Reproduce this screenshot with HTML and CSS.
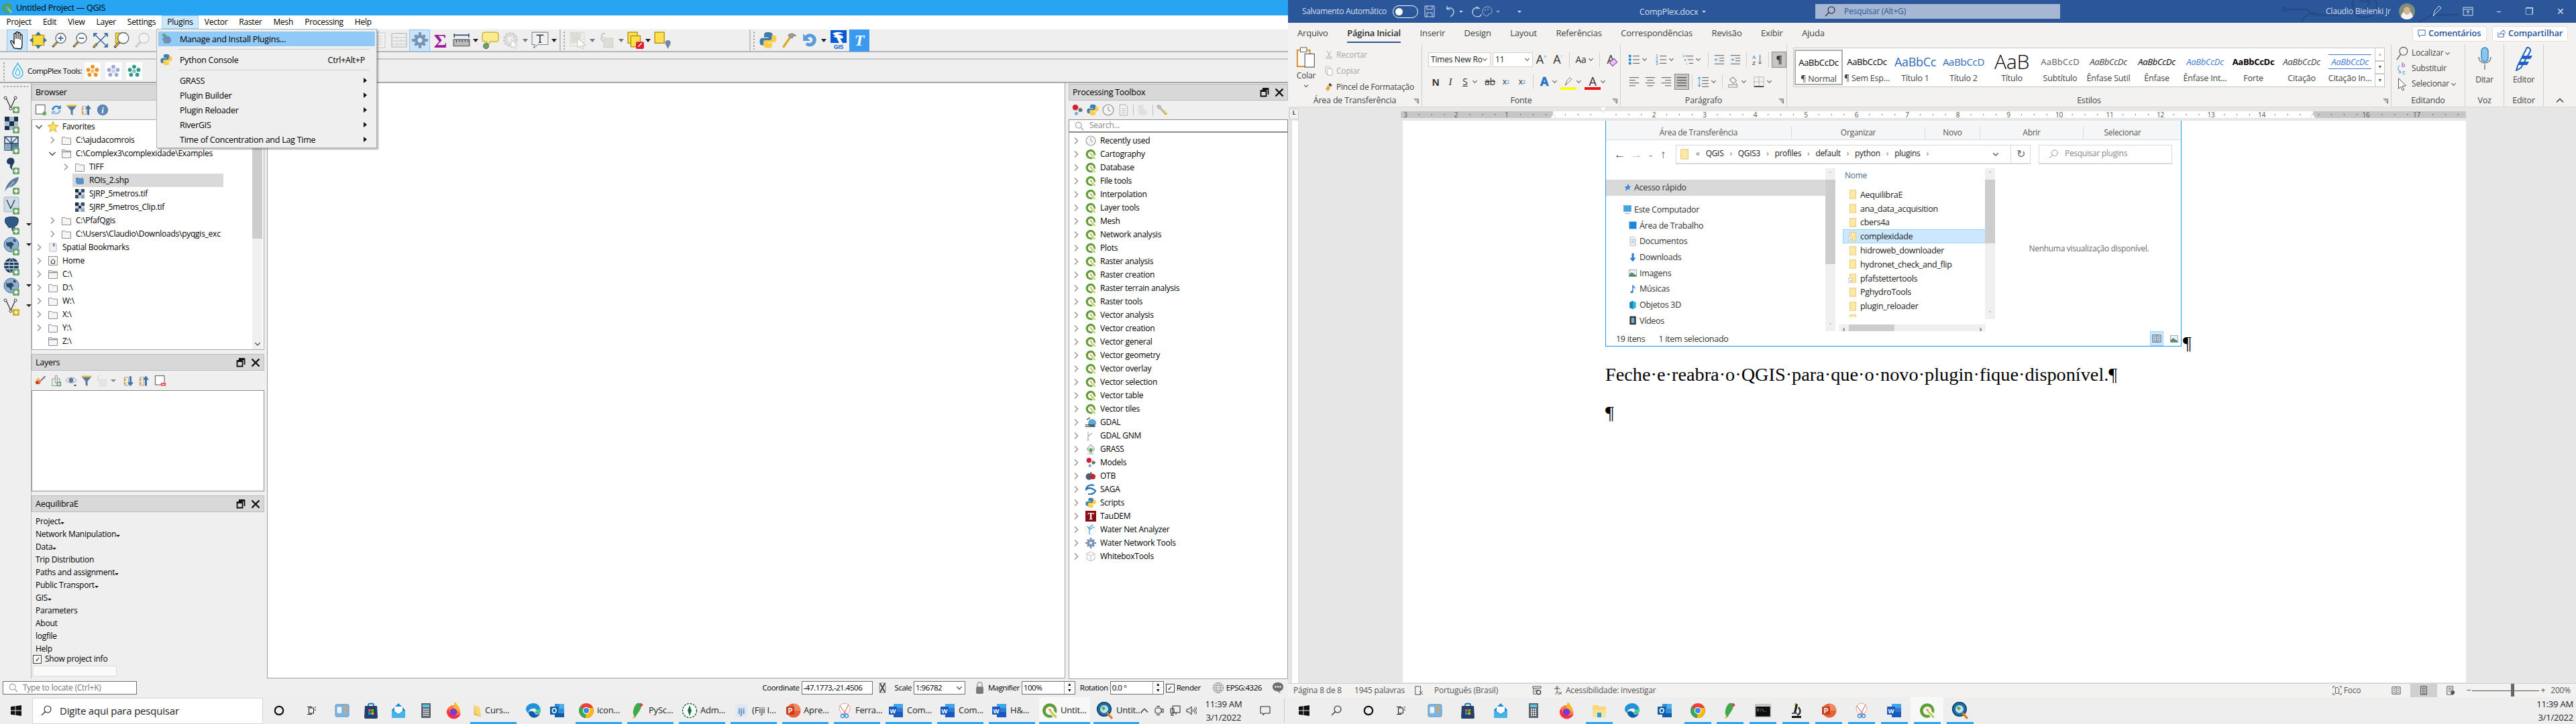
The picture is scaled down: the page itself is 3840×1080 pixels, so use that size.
FILE: index.html
```html
<!DOCTYPE html>
<html lang="en">
<head>
<meta charset="utf-8">
<title>QGIS and Word</title>
<link rel="stylesheet" href="styles.css">
</head>
<body>
<svg class="defs" xmlns="http://www.w3.org/2000/svg">
  <symbol id="qgis" viewBox="0 0 16 16"><path d="M8 .8a7.2 7.2 0 1 0 3.2 13.6L9.2 12.2A4.2 4.2 0 1 1 12.2 8.6l2.2 2A7.2 7.2 0 0 0 8 .8z" fill="#5f9e35"/><path d="M9 9l5.5 6" stroke="#b9cf56" stroke-width="2"/><path d="M6.2 6.2l3.2.4-.6 3.2z" fill="#ee8b2c"/></symbol>
  <symbol id="folder" viewBox="0 0 14 14"><path d="M.5 2.5h4.5l1.5 1.5h7v9.5H.5z" fill="#f5f5f5" stroke="#8f8f8f"/></symbol>
  <symbol id="folderopen" viewBox="0 0 14 14"><path d="M.5 1.5h4.5l1 1.5h7.5v10.5H.5z" fill="#f5f5f5" stroke="#8f8f8f"/><path d="M.5 4.5h13" stroke="#8f8f8f" stroke-width="1.5"/></symbol>
  <symbol id="chev" viewBox="0 0 12 12"><path d="M4 1.5 8.5 6 4 10.5" fill="none" stroke="#9a9a9a" stroke-width="1.6"/></symbol>
  <symbol id="chevd" viewBox="0 0 12 12"><path d="M1.5 4 6 8.5 10.5 4" fill="none" stroke="#555" stroke-width="1.6"/></symbol>
  <symbol id="star" viewBox="0 0 16 18"><path d="M8 1l2.2 5.6 5.6.4-4.3 3.8 1.4 5.8L8 13.6l-4.9 3 1.4-5.8L.2 7l5.6-.4z" fill="#f7e25a" stroke="#d7a92a"/></symbol>
  <symbol id="raster" viewBox="0 0 14 14"><rect width="14" height="14" fill="#c8d4e2"/><rect width="5" height="5" fill="#1e2b3c"/><rect x="9" width="5" height="5" fill="#3b4d66"/><rect x="5" y="5" width="4" height="4" fill="#1e2b3c"/><rect y="9" width="5" height="5" fill="#3b4d66"/><rect x="9" y="9" width="5" height="5" fill="#8ea2ba"/></symbol>
  <symbol id="vecfile" viewBox="0 0 14 14"><path d="M1 3h4l2 1 4-1 2 3v6l-3 1H3l-2-3z" fill="#5a8fc8"/></symbol>
  <symbol id="bookmark" viewBox="0 0 14 16"><rect x="1" y="1" width="12" height="14" rx="1" fill="#f0f0f0" stroke="#bdbdbd"/><path d="M7 1h3v6l-1.5-1L7 7z" fill="#6c8fb2"/></symbol>
  <symbol id="home" viewBox="0 0 14 14"><rect x=".5" y=".5" width="13" height="13" fill="#f5f5f5" stroke="#8f8f8f"/><path d="M3.5 8 7 4.5 10.5 8M4.5 7.5V11h5V7.5" fill="none" stroke="#333"/></symbol>
  <symbol id="glass" viewBox="0 0 24 24"><circle cx="14.5" cy="9" r="7.5" fill="#fdfdfd" stroke="#6d7278" stroke-width="1.4"/><path d="M9 15 2.5 22" stroke="#333" stroke-width="3"/><path d="M8.5 15.5 3.5 21" stroke="#f2c230" stroke-width="1.5"/></symbol>
  <symbol id="hand" viewBox="0 0 24 30"><path d="M7 27l-5-9c-1-2 1-3 2-2l3 4V6c0-2 3-2 3 0v7-9c0-2 3-2 3 0v9-8c0-2 3-2 3 0v9-6c0-2 3-2 3 0v14c0 3-1 5-2 6z" fill="#fff" stroke="#111" stroke-width="1.3"/></symbol>
  <symbol id="pan" viewBox="0 0 24 24"><rect x="4" y="5" width="16" height="14" fill="#f7dc3a" stroke="#b38d10"/><path d="M12 0l4 5H8zM12 24l-4-5h8zM0 12l5-4v8zM24 12l-5 4V8z" fill="#3d6d9e"/></symbol>
  <symbol id="full" viewBox="0 0 24 24"><path d="M2 2h6L2 8zM22 2v6l-6-6zM22 22h-6l6-6z" fill="#3d6d9e"/><path d="M5 5l14 14M19 5 7 17" stroke="#3d6d9e" stroke-width="1.4"/><path d="M7 17l-5 5" stroke="#333" stroke-width="3"/><path d="M6.500 17.500l-4 4" stroke="#f2c230" stroke-width="1.4"/></symbol>
  <symbol id="callout" viewBox="0 0 24 24"><path d="M3 1h18l2 2v9l-2 2H12l-4 6-1-6H3l-2-2V3z" fill="#fdeb93" stroke="#c9a821" stroke-width="1.2"/><circle cx="6" cy="20" r="3.500" fill="#6ea56f" stroke="#3d6d3e"/></symbol>
  <symbol id="textc" viewBox="0 0 24 24"><path d="M1 1h22v17H9l-6 5 2-5H1z" fill="#eef2f5" stroke="#888"/><path d="M7 5h10M12 5v10M10 15h4" stroke="#444" stroke-width="1.6" fill="none"/></symbol>
  <symbol id="ruler" viewBox="0 0 24 24"><path d="M2 3v5M22 3v5M2 5h20" stroke="#36506f" stroke-width="1.6"/><rect x="1" y="11" width="22" height="9" fill="#bbb" stroke="#555"/><path d="M5 11v4M9 11v3M13 11v4M17 11v3M21 11v4" stroke="#444"/></symbol>
  <symbol id="squares" viewBox="0 0 24 24"><rect x="1" y="1" width="13" height="15" fill="#fde24d" stroke="#b08d10" stroke-width="1.2"/><rect x="5" y="6" width="13" height="15" fill="#fde24d" stroke="#b08d10" stroke-width="1.2"/><rect x="12" y="14" width="11" height="10" rx="2" fill="#e11b2c"/><path d="M15 21l5-5" stroke="#fff" stroke-width="1.400"/></symbol>
  <symbol id="selpin" viewBox="0 0 24 24"><rect x="1" y="1" width="13" height="15" fill="#fde24d" stroke="#b08d10" stroke-width="1.2"/><path d="M19 24l-3.500-7a3.800 3.800 0 1 1 7 0z" fill="#6f8aa3"/></symbol>
  <symbol id="python" viewBox="0 0 24 24"><path d="M12 1C7 1 6.500 3 6.500 5v3h6v1H4c-2.500 0-3.500 2-3.500 5s1 5 3.500 5h3v-4c0-2 1.500-3 3-3h6c1.500 0 2.500-1 2.500-2.500V5c0-2-2-4-6.500-4z" fill="#3f7cac"/><path d="M12 23c5 0 5.500-2 5.500-4v-3h-6v-1H20c2.500 0 3.500-2 3.500-5s-1-5-3.500-5h-3v4c0 2-1.500 3-3 3H8c-1.500 0-2.500 1-2.500 2.500V19c0 2 2 4 6.500 4z" fill="#f9cd4a"/></symbol>
  <symbol id="hammer" viewBox="0 0 24 24"><path d="M4 22 15 6" stroke="#e2a81e" stroke-width="3"/><path d="M11 5c3-3 7-3 11 1l-4 .5-1.500 3-5-3z" fill="#9a9a9a" stroke="#666" stroke-width=".6"/></symbol>
  <symbol id="reload" viewBox="0 0 24 24"><path d="M6 18c4 5 15 3 15-7C21 4 11 0 6 6L3 3v10h10L9 9c3-3 7-1 7 2 0 5-5 6-7 4z" fill="#5a9be0"/></symbol>
  <symbol id="rgis" viewBox="0 0 24 30"><path d="M0 0h24v19H0z" fill="#0a5ad2"/><path d="M3 5c6-3 12-3 16 0-3 0-6 0-8 2 4 0 8 1 8 4-2 2-4 2-5 1l4 7h-5l-4-8-5-1 3-2z" fill="#fff"/></symbol>
  <symbol id="disdoc" viewBox="0 0 24 24"><rect x="2" y="1" width="20" height="22" fill="#f2f2f2" stroke="#c9c9c9"/><path d="M6 6h12M6 10h12M6 14h12M6 18h12" stroke="#c9c9c9"/></symbol>
  <symbol id="abacus" viewBox="0 0 24 24"><rect x="1" y="2" width="22" height="20" fill="none" stroke="#c4c4c4" stroke-width="1.5"/><path d="M2 8h20M2 13h20M2 18h20" stroke="#c4c4c4"/><path d="M7 6h3v4H7zM14 11h3v4h-3zM8 16h3v4H8z" fill="#ddd"/></symbol>
  <symbol id="gear" viewBox="0 0 24 24"><g fill="#7593b8"><circle cx="12" cy="12" r="8"/><path d="M10 0h4v5h-4zM10 19h4v5h-4zM0 10h5v4H0zM19 10h5v4h-5zM3 6l3-3 3 3-3 3zM15 18l3-3 3 3-3 3zM15 6l3-3 3 3-3 3zM3 18l3-3 3 3-3 3z"/></g><circle cx="12" cy="12" r="3.500" fill="#dfe9f3"/></symbol>
  <symbol id="disgear" viewBox="0 0 24 24"><circle cx="11" cy="11" r="9" fill="#dcdcdc" stroke="#c8c8c8" stroke-dasharray="3 2" stroke-width="2"/><circle cx="11" cy="11" r="4" fill="#f2f2f2"/><path d="M12 11l9 8-4 1 2 4-2 .5-2-4-3 2z" fill="#fff" stroke="#ccc"/></symbol>
  <symbol id="dissel" viewBox="0 0 24 24"><rect x="1" y="1" width="19" height="19" fill="none" stroke="#bbb" stroke-dasharray="2 2"/><rect x="2" y="2" width="14" height="14" fill="#dedcd4"/><path d="M11 9l11 10-5 .5 2.500 4-2.500 .5-2-4-4 2z" fill="#fff" stroke="#ccc"/></symbol>
  <symbol id="disexpr" viewBox="0 0 24 24"><path d="M9 2C4 1 3 5 5 7 2 9 3 14 9 13" fill="none" stroke="#c8c8c8" stroke-width="2"/><rect x="7" y="9" width="14" height="14" fill="#dedcd4" stroke="#cfcfcf"/></symbol>
  <symbol id="cv" viewBox="0 0 24 24"><path d="M4 4l7 15 7-15" fill="none" stroke="#333" stroke-width="1.300"/><circle cx="3" cy="4" r="2" fill="#fff" stroke="#333"/><circle cx="11" cy="20" r="2" fill="#fff" stroke="#333"/><circle cx="18" cy="4" r="2" fill="#fff" stroke="#333"/></symbol>
  <symbol id="plus" viewBox="0 0 10 10"><rect width="10" height="10" rx="1.500" fill="#6fa86e"/><path d="M5 2v6M2 5h6" stroke="#fff" stroke-width="1.800"/></symbol>
  <symbol id="checker" viewBox="0 0 24 24"><path d="M2 2h20v20H2z" fill="#a8bdd3"/><path d="M2 2h7v7H2zM16 2h6v7h-6zM9 9h7v7H9zM2 16h7v6H2z" fill="#1e2f46"/></symbol>
  <symbol id="mesh" viewBox="0 0 24 24"><rect x="2" y="2" width="20" height="20" fill="#dbe5ef" stroke="#2a4866" stroke-width="1.500"/><path d="M12 12h10v10H12z" fill="#5c7e9e"/><path d="M2 12h10v10H2z" fill="#8ba7c2"/><path d="M12 2v20M2 12h20M2 2l10 10M22 2 12 12" stroke="#2a4866" stroke-width="1.300"/></symbol>
  <symbol id="comma" viewBox="0 0 24 24"><path d="M8 3c6-3 11 3 7 9-2 3-3 5-1 9-5-3-5-7-3-9-3 1-6-1-6-4 0-2 1-4 3-5z" fill="#1f3d60"/></symbol>
  <symbol id="quill" viewBox="0 0 24 24"><path d="M2 23C4 12 11 3 23 1c-1 9-8 15-15 16l-3 2z" fill="#5c7e9e"/><path d="M3 22 16 8" stroke="#fff"/></symbol>
  <symbol id="cvbox" viewBox="0 0 24 24"><rect x="1" y="1" width="22" height="22" rx="2" fill="#cfdde9" stroke="#9bb2c6"/><path d="M5 5l6 13 6-13" fill="none" stroke="#333" stroke-width="1.300"/></symbol>
  <symbol id="pg" viewBox="0 0 24 24"><path d="M4 2c4-2 14-2 17 0 3 3 0 9-1 11l-3 1c0 3 0 7-2 9-2-1-2-5-3-8-2 3-5 2-6-2C3 11 1 5 4 2z" fill="#2f5a88" stroke="#16304f"/></symbol>
  <symbol id="globe" viewBox="0 0 24 24"><circle cx="12" cy="12" r="11" fill="#8fb0d0" stroke="#4a6f96"/><path d="M4 8c4 2 6-1 9 0l3 4-3 2-1 6-3-5-4-1zM15 3l4 2-1 3-3-1z" fill="#2d4968"/></symbol>
  <symbol id="wms" viewBox="0 0 24 24"><circle cx="12" cy="12" r="11" fill="#1f3d60"/><path d="M1 12h22M1 7h22M1 17h22" stroke="#cfdce8" stroke-width="1.500"/><path d="M12 1c-5 5-5 17 0 22M12 1c5 5 5 17 0 22" fill="none" stroke="#cfdce8"/></symbol>
  <symbol id="filter" viewBox="0 0 24 24"><path d="M2 2h20v3H2z" fill="#e8b826"/><path d="M3 5h18l-7 8v10l-4-3v-7z" fill="#52799f"/></symbol>
  <symbol id="refresh" viewBox="0 0 24 24"><path d="M3 12C3 5 12 1 18 5l3-3v8h-8l3-3C12 5 7 7 7 12z" fill="#2f84c9"/><path d="M21 12c0 7-9 11-15 7l-3 3v-8h8l-3 3c4 2 9 0 9-5z" fill="#8ab6df"/></symbol>
  <symbol id="newdoc" viewBox="0 0 24 24"><rect x="2" y="2" width="18" height="18" fill="#fff" stroke="#666" stroke-width="1.500"/><circle cx="19" cy="19" r="4" fill="#6fa86e"/></symbol>
  <symbol id="collapse" viewBox="0 0 24 24"><path d="M2 5h8v16H2z" fill="none" stroke="#888"/><rect x="1" y="8" width="4" height="4" fill="#e9a13b"/><rect x="1" y="15" width="4" height="4" fill="#e9a13b"/><path d="M14 2l6 8h-4v12h-4V10H8z" fill="#3f73aa"/></symbol>
  <symbol id="expand" viewBox="0 0 24 24"><path d="M2 5h8v16H2z" fill="none" stroke="#888"/><rect x="1" y="8" width="4" height="4" fill="#e9a13b"/><rect x="1" y="15" width="4" height="4" fill="#e9a13b"/><path d="M14 23l6-8h-4V3h-4v12H8z" fill="#3f73aa"/></symbol>
  <symbol id="info" viewBox="0 0 24 24"><circle cx="12" cy="12" r="11" fill="#5b87b8"/></symbol>
  <symbol id="paint" viewBox="0 0 24 24"><path d="M3 17c3-5 8-8 12-7l-4 9z" fill="#d8893b"/><path d="M2 14l5-3 3 7-6 1z" fill="#d8342f"/><path d="M14 11l8-8" stroke="#8a6ab0" stroke-width="3"/><path d="M3 9l6-3 2 3-5 3z" fill="#e8c233"/></symbol>
  <symbol id="addgrp" viewBox="0 0 24 24"><path d="M5 8h15v14H5z" fill="#eee" stroke="#777"/><path d="M11 2h4v14h-4z" fill="#eee" stroke="#777"/><rect x="14" y="14" width="9" height="9" rx="1" fill="#6fa86e"/><path d="M18.500 16v5M16 18.500h5" stroke="#fff" stroke-width="1.500"/></symbol>
  <symbol id="eye" viewBox="0 0 24 24"><path d="M1 11c6-7 16-7 22 0-6 7-16 7-22 0z" fill="#eee" stroke="#777"/><circle cx="12" cy="11" r="4.500" fill="#4d7cad"/><path d="M17 20h6l-3 3z" fill="#222"/></symbol>
  <symbol id="rmdoc" viewBox="0 0 24 24"><rect x="2" y="2" width="18" height="18" fill="#fff" stroke="#666" stroke-width="1.500"/><rect x="13" y="16" width="10" height="6" rx="1" fill="#e84850"/><path d="M15 19h6" stroke="#fff" stroke-width="1.500"/></symbol>
  <symbol id="dock" viewBox="0 0 14 14"><path d="M4 1.500h8.500V10M1.500 4.500h8v8h-8z" fill="none" stroke="#111" stroke-width="1.800"/><path d="M1.500 4.500h8" stroke="#111" stroke-width="3"/><path d="M4 1.500h8.500" stroke="#111" stroke-width="3"/></symbol>
  <symbol id="close" viewBox="0 0 14 14"><path d="M1.500 1.500l11 11M12.500 1.500l-11 11" stroke="#111" stroke-width="2.400"/></symbol>
  <symbol id="clock" viewBox="0 0 16 16"><circle cx="8" cy="8" r="7" fill="#f6f6f6" stroke="#999" stroke-width="1.200"/><path d="M8 3.500V8l3 2" stroke="#888" fill="none"/></symbol>
  <symbol id="redgears" viewBox="0 0 24 24"><circle cx="8" cy="7" r="5" fill="#d01f2f" stroke="#d01f2f" stroke-width="2" stroke-dasharray="2 1.500"/><circle cx="18" cy="12" r="3.500" fill="#6c6c6c" stroke="#6c6c6c" stroke-width="2" stroke-dasharray="1.500 1.500"/><circle cx="10" cy="19" r="3" fill="#7aa6d6" stroke="#7aa6d6" stroke-width="1.500" stroke-dasharray="1.500 1"/></symbol>
  <symbol id="docg" viewBox="0 0 16 16"><path d="M3 1h7l3 3v11H3z" fill="#f4f4f4" stroke="#bbb"/><path d="M5 6h6M5 9h6M5 12h6" stroke="#bbb"/></symbol>
  <symbol id="edit" viewBox="0 0 24 24"><path d="M2 2h13l-3 4 2 8 5 4-1 4H3z" fill="#e2e0dc"/><path d="M12 9l8 9" stroke="#ddd" stroke-width="2"/></symbol>
  <symbol id="wrench" viewBox="0 0 24 24"><path d="M3 2l5 2 1 4 11 11-2 3L7 10 3 9 1 5z" fill="#c3c3c3" stroke="#777" stroke-width=".7"/><path d="M12 12l9 9" stroke="#e6c234" stroke-width="3"/></symbol>
  <symbol id="gdal" viewBox="0 0 16 16"><circle cx="10" cy="9" r="6" fill="#5fa8d6"/><path d="M2 4l5-3" stroke="#333" stroke-width="1.300"/></symbol>
  <symbol id="gnm" viewBox="0 0 16 16"><path d="M4 2v11M4 9l6-5" stroke="#aaa" stroke-width="1.200"/><circle cx="4" cy="14" r="1.500" fill="#bbb"/></symbol>
  <symbol id="grass" viewBox="0 0 16 16"><path d="M8 1l6 7-6 6-6-6z" fill="#eef5ea" stroke="#888"/><path d="M8 12V6M8 12 5 7M8 12l3-5" stroke="#2f8f3a" stroke-width="1.400"/><path d="M3 15h10" stroke="#aaa"/></symbol>
  <symbol id="otb" viewBox="0 0 16 16"><circle cx="5.500" cy="9" r="5" fill="#4b5f78"/><circle cx="11" cy="9" r="4" fill="#c5262f"/><path d="M8 2l1 4" stroke="#333" stroke-width="1.400"/></symbol>
  <symbol id="saga" viewBox="0 0 16 16"><path d="M13 2C7 0 2 3 1 8c4-3 9-2 14 2-1 4-6 6-11 5" fill="none" stroke="#1d6fb3" stroke-width="2.200"/></symbol>
  <symbol id="wna" viewBox="0 0 16 16"><circle cx="8" cy="8" r="7.500" fill="#fff" stroke="#e5e5e5"/><path d="M6 15V4M6 8 3 3M6 8l7-4M6 5l5-4" stroke="#3d8fd0" stroke-width="1.100" fill="none"/></symbol>
  <symbol id="wbox" viewBox="0 0 16 16"><path d="M8 1l6 3v8l-6 3-6-3V4zM2 4l6 3 6-3M8 7v8" fill="#fff" stroke="#bbb"/></symbol>
  <symbol id="drop" viewBox="0 0 16 24"><path d="M8 1c3 6 7 9 7 14a7 7 0 0 1-14 0C1 10 5 7 8 1z" fill="#eaf7fc" stroke="#49b3dc" stroke-width="1.400"/><path d="M8 8c2 3 3 5 3 7a3 3 0 0 1-6 0c0-2 1-4 3-7z" fill="none" stroke="#49b3dc" stroke-width="1.200"/></symbol>
  <symbol id="flower" viewBox="0 0 24 24"><g fill="currentColor"><circle cx="12" cy="5" r="3.200"/><circle cx="5" cy="10" r="3.200"/><circle cx="19" cy="10" r="3.200"/><circle cx="7" cy="18" r="3.200"/><circle cx="17" cy="18" r="3.200"/><circle cx="12" cy="12" r="2.800"/></g><path d="M12 8v8M9 11l6 2M15 11l-6 2" stroke="#fff" opacity=".6"/></symbol>
  <symbol id="plug" viewBox="0 0 24 24"><path d="M4 12l6-9 3 3 6 2 3 7-4 6H8z" fill="#6f8fb0"/><path d="M3 4l4 4 4-4-4-3z" fill="#5fa85a"/></symbol>
  <symbol id="searchg" viewBox="0 0 16 16"><circle cx="6.500" cy="6.500" r="5" fill="none" stroke="#a0a0a0" stroke-width="1.300"/><path d="M10.500 10.500 15 15" stroke="#a0a0a0" stroke-width="1.600"/></symbol>
  <symbol id="mouse" viewBox="0 0 16 22"><path d="M3 2l10 18M13 2 3 20" stroke="#444" stroke-width="2.400"/><ellipse cx="8" cy="11" rx="6" ry="9" fill="none" stroke="#666"/></symbol>
  <symbol id="lock" viewBox="0 0 14 22"><path d="M3 10V6a4 4 0 0 1 8 0v4" fill="none" stroke="#999" stroke-width="1.600"/><rect x="1" y="9" width="12" height="12" rx="2" fill="#7a7a7a"/></symbol>
  <symbol id="earth" viewBox="0 0 20 20"><circle cx="10" cy="10" r="8.500" fill="#e8e8e8" stroke="#8f8f8f"/><path d="M1.500 10h17M2.500 6h15M2.500 14h15M10 1.500c-5 5-5 12 0 17M10 1.500c5 5 5 12 0 17" fill="none" stroke="#8f8f8f"/></symbol>
  <symbol id="bubble" viewBox="0 0 18 18"><path d="M9 1c5 0 8 2.500 8 6.500S14 14 11 14l2 3.500L8 14C4 14 1 11.500 1 7.500S4 1 9 1z" fill="#6d6d6d"/><circle cx="5.500" cy="7.500" r="1.200" fill="#fff"/><circle cx="9" cy="7.500" r="1.200" fill="#fff"/><circle cx="12.500" cy="7.500" r="1.200" fill="#fff"/></symbol>
  <symbol id="win" viewBox="0 0 16 16"><path d="M0 2.200 6.500 1.300v6.200H0zM7.400 1.200 16 0v7.500H7.400zM0 8.400h6.500v6.300L0 13.800zM7.400 8.400H16V16l-8.600-1.200z" fill="#111"/></symbol>
  <symbol id="srch" viewBox="0 0 16 16"><circle cx="10" cy="6" r="5" fill="none" stroke="#222" stroke-width="1.100"/><path d="M6.500 9.500 1 15" stroke="#222" stroke-width="1.100"/></symbol>
  <symbol id="cort" viewBox="0 0 16 16"><circle cx="8" cy="8" r="6.200" fill="none" stroke="#111" stroke-width="2.200"/></symbol>
  <symbol id="task" viewBox="0 0 16 16"><path d="M4.500 4h7v8h-7zM2 2.500h7M2 13.500h7M14 2v2M14 6v2" fill="none" stroke="#111"/></symbol>
  <symbol id="widget" viewBox="0 0 24 24"><rect x="1" y="2" width="22" height="20" rx="2" fill="#7ab4e4" stroke="#6b93b5"/><rect x="4" y="6" width="7" height="10" fill="#eef5fb"/><path d="M14 6h6M14 10h6M14 14h6" stroke="#f5a03b" stroke-width="2"/></symbol>
  <symbol id="store" viewBox="0 0 24 24"><path d="M8 6V3c0-2 8-2 8 0v3" fill="none" stroke="#1d6fb3" stroke-width="1.800"/><path d="M3 5h18l1 17c0 1-1 2-2 2H4c-1 0-2-1-2-2z" fill="#24406a"/><rect x="8" y="10" width="3.500" height="3.500" fill="#f15a24"/><rect x="12.500" y="10" width="3.500" height="3.500" fill="#7cbb00"/><rect x="8" y="14.500" width="3.500" height="3.500" fill="#00a1f1"/><rect x="12.500" y="14.500" width="3.500" height="3.500" fill="#ffbb00"/></symbol>
  <symbol id="mail" viewBox="0 0 24 24"><path d="M12 1l10 10v12H2V11z" fill="#1b8ad4"/><path d="M6 6h12v7l-6 4-6-4z" fill="#fff"/><path d="M2 11l10 7 10-7v12H2z" fill="#47b2ec"/></symbol>
  <symbol id="calc" viewBox="0 0 24 24"><rect x="5" y="1" width="14" height="22" fill="#5a6570"/><rect x="7" y="3" width="10" height="4" fill="#59c2ec"/><path d="M8 9h2v2H8zM11 9h2v2h-2zM14 9h2v2h-2zM8 12h2v2H8zM11 12h2v2h-2zM14 12h2v2h-2zM8 15h2v2H8zM11 15h2v2h-2zM14 15h2v2h-2zM8 18h2v2H8zM11 18h2v2h-2zM14 18h2v2h-2z" fill="#e9e9e9"/></symbol>
  <symbol id="firefox" viewBox="0 0 24 24"><circle cx="12" cy="14" r="9.500" fill="#ff7b3a"/><path d="M14 0c4 5 8 9 7 15-3-4-7-4-9-7 0-3 1-5 2-8z" fill="#ffb52b"/><circle cx="12" cy="14" r="5" fill="#7a3ad0"/><path d="M3 12c0 6 4 11 10 11 5 0 8-3 9-7-3 3-9 4-13 1-3-2-4-4-3-8z" fill="#f2295a"/></symbol>
  <symbol id="explorer" viewBox="0 0 24 24"><path d="M2 4h8l2 2h10v16H2z" fill="#f8d775"/><rect x="2" y="11" width="20" height="11" fill="#fbe29b"/><path d="M9 15h6v7H9z" fill="#2d9be0"/></symbol>
  <symbol id="folderbar" viewBox="0 0 14 24"><path d="M1 3l9 3 3 16-11-3z" fill="#f7d671"/><path d="M1 3v16l11 3-9-6z" fill="#e2b94d"/></symbol>
  <symbol id="edge" viewBox="0 0 24 24"><path d="M12 1a11 11 0 0 1 11 11c0 5-7 6-9 3 4 0 4-3 2-5-4-3-12 0-11 6-3-2-4-4-4-6C1 5 6 1 12 1z" fill="#1e92dc"/><path d="M5 16c1 5 7 8 11 6 3-1 5-3 6-6-4 3-8 2-8-1-3-3-9-3-9 1z" fill="#0c5ea8"/><path d="M16 15c3 1 7 0 7-4 0-3-1-4-2-5 1 4-1 5-3 5-2 0-4 2-2 4z" fill="#4bd08c"/></symbol>
  <symbol id="outlook" viewBox="0 0 24 24"><path d="M8 2h14v20H8z" fill="#2f8fdd"/><path d="M15 2h7v7h-7z" fill="#50b0ef"/><path d="M8 16h14v6H8z" fill="#0f5ca8"/><rect x="1" y="6" width="12" height="12" rx="1" fill="#0e5ca6"/></symbol>
  <symbol id="chrome" viewBox="0 0 24 24"><circle cx="12" cy="12" r="11" fill="#ea4335"/><path d="M12 12 3 6v0C1 9 0 14 3 18c2 3 5 5 8 5z" fill="#34a853"/><path d="M12 8h10c1 4 1 8-2 11-2 2-5 4-9 4z" fill="#fbbc05"/><circle cx="12" cy="12" r="5.200" fill="#fff"/><circle cx="12" cy="12" r="4" fill="#4285f4"/></symbol>
  <symbol id="parrot" viewBox="0 0 24 24"><path d="M11 1c4-1 7 2 6 5-1 4-3 7-6 11-1 2-3 5-4 6l-1-4C3 15 6 4 11 1z" fill="#3fa84a"/><path d="M15 1c3 0 5 2 4 4l-3 1z" fill="#e33"/><path d="M6 19l-2 5 4-2z" fill="#eab329"/></symbol>
  <symbol id="admin" viewBox="0 0 24 24"><circle cx="12" cy="12" r="10.500" fill="#fff" stroke="#1f6f45" stroke-width="1.500" stroke-dasharray="3 1.500"/><path d="M12 4l3 8-3 8-3-8z" fill="#1f6f45"/></symbol>
  <symbol id="fiji" viewBox="0 0 24 24"><rect x="3" y="2" width="18" height="20" fill="#dfe8f3"/></symbol>
  <symbol id="ppt" viewBox="0 0 24 24"><circle cx="13" cy="12" r="10.500" fill="#e5613c"/><path d="M13 1.500V12h10.500A10.500 10.500 0 0 0 13 1.500z" fill="#f08a5d"/><rect x="2" y="6" width="12" height="12" rx="1" fill="#c43e1c"/></symbol>
  <symbol id="snip" viewBox="0 0 24 24"><circle cx="12" cy="9" r="8" fill="#fff" stroke="#e8a0a0"/><path d="M5 5l9 12M18 3l-7 14" stroke="#d04848"/><circle cx="9" cy="20" r="2.500" fill="none" stroke="#2f8fdd" stroke-width="1.300"/><circle cx="15" cy="20" r="2.500" fill="none" stroke="#2f8fdd" stroke-width="1.300"/></symbol>
  <symbol id="word" viewBox="0 0 24 24"><path d="M8 2h14v20H8z" fill="#2b7cd3"/><path d="M8 2h14v6H8z" fill="#41a5ee"/><path d="M8 14h14v8H8z" fill="#185abd"/><rect x="1" y="6" width="12" height="12" rx="1" fill="#185abd"/></symbol>
  <symbol id="qglobe" viewBox="0 0 24 24"><circle cx="11" cy="10" r="9.500" fill="#1d6fa5" stroke="#0d3f66" stroke-width="1.400"/><circle cx="11" cy="10" r="5.500" fill="#bfe2f5"/><path d="M7 8c2-2 5-2 6 1l-3 3z" fill="#6aaa4a"/><path d="M15 15l7 8" stroke="#e07a2b" stroke-width="3"/></symbol>
  <symbol id="cmd" viewBox="0 0 24 24"><rect x="1" y="3" width="22" height="18" fill="#0c0c0c" stroke="#888"/><rect x="1" y="3" width="22" height="3" fill="#ccc"/></symbol>
  <symbol id="micro" viewBox="0 0 24 24"><path d="M12 1l3 2-3 13-3-1z" fill="#222"/><path d="M10 4l2-3" stroke="#e8b826" stroke-width="2"/><path d="M16 7c4 5 3 10-2 12" fill="none" stroke="#333" stroke-width="2.500"/><rect x="6" y="20" width="14" height="3" fill="#111"/><rect x="6" y="15" width="8" height="2" fill="#555"/></symbol>
  <symbol id="up" viewBox="0 0 12 12"><path d="M1 8.500 6 3.500 11 8.500" fill="none" stroke="#333" stroke-width="1.300"/></symbol>
  <symbol id="meet" viewBox="0 0 16 16"><rect x="2" y="4" width="9" height="8" rx="2" fill="none" stroke="#222"/><path d="M11 7l3-2v6l-3-2" fill="none" stroke="#222"/><path d="M4 1.500h5M4 14.500h5" stroke="#222"/></symbol>
  <symbol id="net" viewBox="0 0 16 16"><path d="M4 1h11v10H4zM1 5h5v7H1zM3 12v3M1 15h5M9 11v3" fill="none" stroke="#222"/></symbol>
  <symbol id="vol" viewBox="0 0 16 16"><path d="M1 6h3l4-4v12L4 10H1zM10 6c1 1 1 3 0 4M12 4c2 2 2 6 0 8M14 2.500c3 3 3 8 0 11" fill="none" stroke="#222"/></symbol>
  <symbol id="notif" viewBox="0 0 16 16"><path d="M1 2h14v10H7l-2 3v-3H1z" fill="none" stroke="#222"/></symbol>
  <symbol id="w-bullets" viewBox="0 0 20 20"><g fill="#1f8ad0"><rect x="1" y="2" width="4" height="4"/><rect x="1" y="8" width="4" height="4"/><rect x="1" y="14" width="4" height="4"/></g><path d="M8 4h11M8 10h11M8 16h11" stroke="#444"/></symbol>
  <symbol id="w-lines" viewBox="0 0 20 20"><path d="M8 4h11M8 10h11M8 16h11" stroke="#444"/></symbol>
  <symbol id="w-mlines" viewBox="0 0 20 20"><path d="M6 4h13M10 10h9M12 16h7" stroke="#444"/></symbol>
  <symbol id="w-dec" viewBox="0 0 20 20"><path d="M2 3h16M10 7.500h8M10 12h8M2 17h16" stroke="#444"/><path d="M8 10H3M5 8l-2.500 2L5 12" stroke="#1f8ad0" fill="none"/></symbol>
  <symbol id="w-inc" viewBox="0 0 20 20"><path d="M2 3h16M10 7.500h8M10 12h8M2 17h16" stroke="#444"/><path d="M2 10h5M5 8l2.500 2L5 12" stroke="#1f8ad0" fill="none"/></symbol>
  <symbol id="w-al" viewBox="0 0 20 20"><path d="M2 3h16M2 7.500h10M2 12h16M2 16.500h10" stroke="#444"/></symbol>
  <symbol id="w-ac" viewBox="0 0 20 20"><path d="M2 3h16M5 7.500h10M2 12h16M5 16.500h10" stroke="#444"/></symbol>
  <symbol id="w-ar" viewBox="0 0 20 20"><path d="M2 3h16M8 7.500h10M2 12h16M8 16.500h10" stroke="#444"/></symbol>
  <symbol id="w-aj" viewBox="0 0 20 20"><path d="M2 3h16M2 7.500h16M2 12h16M2 16.500h16" stroke="#222"/></symbol>
  <symbol id="w-ls" viewBox="0 0 20 20"><path d="M8 3h11M8 8h11M8 13h11M8 18h11" stroke="#444"/><path d="M3.500 2v16M1 5l2.500-3L6 5M1 15l2.500 3L6 15" stroke="#1f8ad0" fill="none"/></symbol>
  <symbol id="w-shade" viewBox="0 0 20 20"><path d="M9 2l6 6-5 5-6-6z" fill="none" stroke="#444"/><path d="M14 12c1 1.500 2 2.500 2 3.500" stroke="#1f8ad0"/><rect x="2" y="15" width="14" height="4" fill="none" stroke="#888"/></symbol>
  <symbol id="w-bord" viewBox="0 0 20 20"><path d="M2 2h16v16H2zM10 2v16M2 10h16" fill="none" stroke="#777" stroke-dasharray="1 1"/><path d="M2 18h16" stroke="#111" stroke-width="1.500"/></symbol>
  <symbol id="w-sort" viewBox="0 0 20 20"><path d="M14 2v15M11 14l3 3 3-3" stroke="#444" fill="none"/></symbol>
  <symbol id="w-paste" viewBox="0 0 30 34"><rect x="1" y="5" width="20" height="26" fill="#f9f9f9" stroke="#d4820f" stroke-width="1.800"/><rect x="6" y="1" width="10" height="7" fill="#fff" stroke="#555"/><rect x="13" y="11" width="15" height="21" fill="#fff" stroke="#333"/></symbol>
  <symbol id="w-scis" viewBox="0 0 16 20"><path d="M4 1l6 12M12 1 6 13" stroke="#9a9a9a" fill="none"/><circle cx="4.500" cy="16" r="2.500" fill="none" stroke="#9a9a9a"/><circle cx="11.500" cy="16" r="2.500" fill="none" stroke="#9a9a9a"/></symbol>
  <symbol id="w-copy" viewBox="0 0 16 20"><path d="M1 1h8l2 2v12H1z" fill="#fff" stroke="#9a9a9a"/><path d="M5 5h8l2 2v12H5z" fill="#fff" stroke="#9a9a9a"/></symbol>
  <symbol id="w-brush" viewBox="0 0 16 20"><path d="M10 1l5 5-4 3-4-4z" fill="#444"/><path d="M6 6l5 5-5 8-5-5z" fill="#f5a03b"/></symbol>
  <symbol id="w-launch" viewBox="0 0 10 10"><path d="M.5.500h8v8M2 2h5v5M8 8 3 3" fill="none" stroke="#777"/></symbol>
  <symbol id="w-find" viewBox="0 0 20 24"><circle cx="12" cy="8" r="6.500" fill="none" stroke="#555" stroke-width="1.200"/><path d="M7.500 13 1 22" stroke="#555" stroke-width="1.400"/></symbol>
  <symbol id="w-rep" viewBox="0 0 20 24"><path d="M6 6C2 9 2 15 8 17M4 14l4 3-4 2" stroke="#1f8ad0" fill="none"/></symbol>
  <symbol id="w-sel" viewBox="0 0 20 24"><path d="M4 2l12 12-6 .5 3 6-2.500 1-3-6L4 19z" fill="#fff" stroke="#444"/></symbol>
  <symbol id="w-mic" viewBox="0 0 24 36"><rect x="7" y="1" width="10" height="21" rx="5" fill="#8cc4ec" stroke="#2f86c9" stroke-width="1.400"/><path d="M3 15c0 12 18 12 18 0M12 26v8" fill="none" stroke="#777" stroke-width="1.400"/></symbol>
  <symbol id="w-ed" viewBox="0 0 30 36"><path d="M20 1 6 28l-2 7 7-4L25 6c1-3-3-6-5-5z" fill="#fff" stroke="#1e63c4" stroke-width="2"/><path d="M14 13h14l-3 5H12zM10 22h13l-3 5H7z" fill="#1e63c4"/></symbol>
  <symbol id="w-com" viewBox="0 0 14 14"><path d="M1 1h12v9H6l-3 3v-3H1z" fill="none" stroke="#2b579a"/></symbol>
  <symbol id="w-share" viewBox="0 0 14 14"><path d="M1 5v8h10V8M4 9c0-4 3-6 6-6V1l4 4-4 4V7c-2 0-4 0-6 2z" fill="none" stroke="#2b579a"/></symbol>
  <symbol id="w-sav" viewBox="0 0 16 18"><path d="M1 1h14v16H1zM4 1v5h8V1M4 17v-6h8v6" fill="none" stroke="#d5dfee"/></symbol>
  <symbol id="w-undo" viewBox="0 0 16 18"><path d="M3 5c6-3 11 1 10 6-1 3-3 5-5 6M3 1v5h5" fill="none" stroke="#d5dfee" stroke-width="1.200"/></symbol>
  <symbol id="w-redo" viewBox="0 0 16 18"><path d="M13 5C8 1 2 5 2 10s4 7 8 7c3 0 5-2 5-4" fill="none" stroke="#d5dfee" stroke-width="1.200"/><path d="M9 1v5" stroke="#d5dfee"/></symbol>
  <symbol id="w-pal" viewBox="0 0 16 18"><path d="M8 2a7 7 0 1 0 0 14c2 0 1-2 2-3s5 1 5-4-3-7-7-7z" fill="none" stroke="#a2b6d4"/><circle cx="5" cy="7" r="1" fill="#a2b6d4"/><circle cx="9" cy="6" r="1" fill="#a2b6d4"/></symbol>
  <symbol id="w-pen" viewBox="0 0 16 18"><path d="M2 16l3-9 6-6 3 3-6 6z" fill="none" stroke="#d5dfee"/></symbol>
  <symbol id="w-high" viewBox="0 0 16 18"><path d="M2 16l3-9 6-6 3 3-6 6z" fill="#fff" stroke="#444"/></symbol>
  <symbol id="w-disp" viewBox="0 0 16 18"><path d="M1 3h14v12H1zM1 6h14M8 13V8M5.500 10 8 8l2.500 2" fill="none" stroke="#d5dfee"/></symbol>
  <symbol id="w-star" viewBox="0 0 16 18"><path d="M9 1l2 5h4l-3.500 3 1 5L9 11l-5 5 1.500-6L2 7h5z" fill="#2f86d6"/></symbol>
  <symbol id="w-pc" viewBox="0 0 16 18"><rect x="1" y="1" width="14" height="11" fill="#38a8e8" stroke="#555" stroke-width=".5"/><path d="M3 15h10v2H3z" fill="#bbb"/></symbol>
  <symbol id="w-desk" viewBox="0 0 16 18"><rect x="1" y="2" width="14" height="14" fill="#1f87d8"/></symbol>
  <symbol id="w-docs" viewBox="0 0 16 18"><path d="M3 1h7l3 3v13H3z" fill="#fff" stroke="#999"/><path d="M5 6h6M5 9h6M5 12h6" stroke="#3a8ed0"/></symbol>
  <symbol id="w-dl" viewBox="0 0 16 18"><path d="M6 1h4v9h4l-6 7-6-7h4z" fill="#2f7fd0"/></symbol>
  <symbol id="w-img" viewBox="0 0 16 18"><rect x="1" y="3" width="14" height="13" fill="#e7f0f6" stroke="#999"/><path d="M1 12l5-4 9 6v2H1z" fill="#5d8a6a"/></symbol>
  <symbol id="w-mus" viewBox="0 0 16 18"><path d="M7 1v12c-5-1-5 5 0 4 2 0 2-2 2-3V6c3 1 4 2 4 5 1-4-1-6-6-10z" fill="#2f86d6"/></symbol>
  <symbol id="w-3d" viewBox="0 0 16 18"><path d="M8 1l6 3v10l-6 3-6-3V4z" fill="#30b5dc"/><path d="M8 1v16L2 14V4z" fill="#1a83ba"/></symbol>
  <symbol id="w-vid" viewBox="0 0 16 18"><rect x="2" y="1" width="12" height="16" fill="#333"/><rect x="5" y="4" width="6" height="10" fill="#6fb0d8"/></symbol>
  <symbol id="w-fold" viewBox="0 0 16 18"><rect x="2" y="1" width="12" height="16" fill="#fde8a8" stroke="#e6c25c"/></symbol>
  <symbol id="w-link" viewBox="0 0 16 18"><rect x="2" y="1" width="12" height="16" fill="#fde8a8" stroke="#e6c25c"/><rect x="0" y="10" width="7" height="7" fill="#fff" stroke="#999" stroke-width=".5"/><path d="M2 16l3-3M3.500 13H5v1.500" fill="none" stroke="#2a9d3a"/></symbol>
  <symbol id="w-foco" viewBox="0 0 16 16"><path d="M1 4V1h3M12 1h3v3M15 12v3h-3M4 15H1v-3" fill="none" stroke="#444"/><path d="M5 3h4l2 2v8H5z" fill="none" stroke="#444"/></symbol>
  <symbol id="w-read" viewBox="0 0 16 16"><path d="M1 2h14v12H1zM8 2v12M3 5h3M3 8h3M3 11h3M10 5h3M10 8h3M10 11h3" fill="none" stroke="#444"/></symbol>
  <symbol id="w-print" viewBox="0 0 16 16"><path d="M3 1h10v14H3zM5 4h6M5 7h6M5 10h6M5 13h6" fill="none" stroke="#333"/></symbol>
  <symbol id="w-web" viewBox="0 0 16 16"><path d="M2 1h10v14H2zM4 4h6M4 7h6M4 10h3" fill="none" stroke="#444"/><circle cx="11.500" cy="11.500" r="3.500" fill="#555"/></symbol>
  <symbol id="w-spell" viewBox="0 0 16 16"><path d="M2 1h9v14H2z" fill="none" stroke="#444"/><path d="M9 9l6 6M15 9l-6 6" stroke="#444"/></symbol>
  <symbol id="w-macro" viewBox="0 0 16 16"><path d="M1 1h14v3H1zM2 4v10h5M4 7h6M4 10h3" fill="none" stroke="#444"/><circle cx="11" cy="11" r="3.500" fill="none" stroke="#333" stroke-width="1.500"/></symbol>
  <symbol id="w-acc" viewBox="0 0 16 16"><circle cx="7" cy="2.500" r="1.500" fill="none" stroke="#444"/><path d="M2 5h10M7 5v5M7 10l-3 5M7 10l3 5M10 10l5 5M15 10l-5 5" stroke="#444" fill="none"/></symbol>
</svg>

<section class="qgis">
  <header class="q-title"><svg class="i16"><use href="#qgis"/></svg><span>Untitled Project — QGIS</span></header>
  <nav class="q-menu">
    <span>Project</span><span>Edit</span><span>View</span><span>Layer</span><span>Settings</span><span class="active">Plugins</span><span>Vector</span><span>Raster</span><span>Mesh</span><span>Processing</span><span>Help</span>
  </nav>
  <div class="q-tb1">
    <div class="tbi pressed"><svg class="hand"><use href="#hand"/></svg></div>
    <div class="tbi"><svg class="i26"><use href="#pan"/></svg></div>
    <div class="tbi"><svg class="i24" viewBox="0 0 24 24"><use href="#glass"/><path d="M14.500 5v8M10.500 9h8" stroke="#3d6d9e" stroke-width="1.800"/></svg></div>
    <div class="tbi"><svg class="i24" viewBox="0 0 24 24"><use href="#glass"/><path d="M10.500 9h8" stroke="#3d6d9e" stroke-width="1.800"/></svg></div>
    <div class="tbi"><svg class="i26"><use href="#full"/></svg></div>
    <div class="tbi"><svg class="i26" viewBox="0 0 24 24"><rect x="4" y="2" width="14" height="14" fill="#f7dc3a" stroke="#b38d10"/><use href="#glass"/></svg></div>
    <div class="tbi dis"><svg class="i24"><use href="#glass"/></svg></div>
    <div class="sp-menu"></div>
    <div class="tbi"><svg class="i24"><use href="#disdoc"/></svg></div>
    <div class="tbi"><svg class="i24"><use href="#abacus"/></svg></div>
    <div class="tbi pressed"><svg class="i24"><use href="#gear"/></svg></div>
    <div class="tbi sigma">Σ</div>
    <div class="tbi"><svg class="i26"><use href="#ruler"/></svg></div>
    <div class="arr"></div>
    <div class="tbi"><svg class="i26"><use href="#callout"/></svg></div>
    <div class="tbi"><svg class="i26"><use href="#disgear"/></svg></div>
    <div class="arr g"></div>
    <div class="tbi"><svg class="i26"><use href="#textc"/></svg></div>
    <div class="arr"></div>
    <div class="vsep"></div>
    <div class="grip"></div>
    <div class="tbi"><svg class="i26"><use href="#dissel"/></svg></div>
    <div class="arr g"></div>
    <div class="tbi"><svg class="i24"><use href="#disexpr"/></svg></div>
    <div class="arr g"></div>
    <div class="tbi"><svg class="i26"><use href="#squares"/></svg></div>
    <div class="arr narrow"></div>
    <div class="tbi"><svg class="i26"><use href="#selpin"/></svg></div>
    <div class="sp-gap"></div>
    <div class="vsep"></div>
    <div class="grip"></div>
    <div class="tbi"><svg class="i26"><use href="#python"/></svg></div>
    <div class="tbi"><svg class="i26"><use href="#hammer"/></svg></div>
    <div class="tbi"><svg class="i26"><use href="#reload"/></svg></div>
    <div class="arr"></div>
    <div class="tbi"><svg class="i28" viewBox="0 0 24 30"><use href="#rgis"/><text x="12" y="28" font-size="8.500" font-weight="700" text-anchor="middle" fill="#0a5ad2" font-family="Liberation Sans">GIS</text></svg></div>
    <div class="tbi tbox">T</div>
  </div>
  <div class="q-tb2"></div>
  <div class="q-tb3">
    <div class="grip"></div>
    <svg class="drop"><use href="#drop"/></svg>
    <span class="ctitle">CompPlex Tools:</span>
    <div class="flw c1"><svg class="i22"><use href="#flower"/></svg></div>
    <div class="flw c2"><svg class="i22"><use href="#flower"/></svg></div>
    <div class="flw c3"><svg class="i22"><use href="#flower"/></svg></div>
  </div>
  <div class="q-main">
    <aside class="vtools">
      <div class="hgrip"></div>
      <div class="vt"><svg class="i24"><use href="#cv"/></svg><svg class="pl"><use href="#plus"/></svg></div>
      <div class="vt"><svg class="i24"><use href="#checker"/></svg><svg class="pl"><use href="#plus"/></svg></div>
      <div class="vt"><svg class="i24"><use href="#mesh"/></svg><svg class="pl"><use href="#plus"/></svg></div>
      <div class="vt"><svg class="i24"><use href="#comma"/></svg><svg class="pl"><use href="#plus"/></svg></div>
      <div class="vt"><svg class="i24"><use href="#quill"/></svg><svg class="pl"><use href="#plus"/></svg></div>
      <div class="vt"><svg class="i24"><use href="#cvbox"/></svg><svg class="pl"><use href="#plus"/></svg></div>
      <div class="vt"><svg class="i24"><use href="#pg"/></svg><svg class="pl"><use href="#plus"/></svg><i class="tri"></i></div>
      <div class="vt"><svg class="i24"><use href="#globe"/></svg><svg class="pl"><use href="#plus"/></svg><i class="tri"></i></div>
      <div class="vt"><svg class="i24"><use href="#wms"/></svg><svg class="pl"><use href="#plus"/></svg></div>
      <div class="vt"><svg class="i24"><use href="#globe"/></svg><svg class="pl"><use href="#plus"/></svg><i class="tri"></i></div>
      <div class="vt"><svg class="i24"><use href="#cv"/></svg><svg class="pl" viewBox="0 0 10 10"><rect width="10" height="10" rx="1" fill="#d9b01f"/><path d="M5 2v6M2 5h6M3 3l4 4M7 3 3 7" stroke="#fff"/></svg><i class="tri"></i></div>
    </aside>
    <div class="docks">
      <div class="dock-title"><span>Browser</span></div>
      <div class="dock-tb b-tb">
        <svg class="i18"><use href="#newdoc"/></svg><svg class="i18"><use href="#refresh"/></svg><svg class="i18"><use href="#filter"/></svg><svg class="i18"><use href="#collapse"/></svg><svg class="i18" viewBox="0 0 24 24"><use href="#info"/><text x="12" y="18" font-size="17" font-style="italic" font-weight="700" text-anchor="middle" fill="#fff" font-family="Liberation Serif">i</text></svg>
      </div>
      <div class="tree">
        <div class="rows">
          <div class="row l0"><svg class="ch"><use href="#chevd"/></svg><div class="cell"><svg class="ic ics"><use href="#star"/></svg><span>Favorites</span></div></div>
          <div class="row l1"><svg class="ch"><use href="#chev"/></svg><div class="cell"><svg class="ic"><use href="#folder"/></svg><span>C:\ajudacomrois</span></div></div>
          <div class="row l1"><svg class="ch"><use href="#chevd"/></svg><div class="cell"><svg class="ic"><use href="#folderopen"/></svg><span>C:\Complex3\complexidade\Examples</span></div></div>
          <div class="row l2"><svg class="ch"><use href="#chev"/></svg><div class="cell"><svg class="ic"><use href="#folder"/></svg><span>TIFF</span></div></div>
          <div class="row l2"><svg class="ch"></svg><div class="cell sel"><svg class="ic"><use href="#vecfile"/></svg><span>ROIs_2.shp</span></div></div>
          <div class="row l2"><svg class="ch"></svg><div class="cell"><svg class="ic"><use href="#raster"/></svg><span>SJRP_5metros.tif</span></div></div>
          <div class="row l2"><svg class="ch"></svg><div class="cell"><svg class="ic"><use href="#raster"/></svg><span>SJRP_5metros_Clip.tif</span></div></div>
          <div class="row l1"><svg class="ch"><use href="#chev"/></svg><div class="cell"><svg class="ic"><use href="#folder"/></svg><span>C:\PfafQgis</span></div></div>
          <div class="row l1"><svg class="ch"><use href="#chev"/></svg><div class="cell"><svg class="ic"><use href="#folder"/></svg><span>C:\Users\Claudio\Downloads\pyqgis_exc</span></div></div>
          <div class="row l0"><svg class="ch"><use href="#chev"/></svg><div class="cell"><svg class="ic"><use href="#bookmark"/></svg><span>Spatial Bookmarks</span></div></div>
          <div class="row l0"><svg class="ch"><use href="#chev"/></svg><div class="cell"><svg class="ic"><use href="#home"/></svg><span>Home</span></div></div>
          <div class="row l0"><svg class="ch"><use href="#chev"/></svg><div class="cell"><svg class="ic"><use href="#folderopen"/></svg><span>C:\</span></div></div>
          <div class="row l0"><svg class="ch"><use href="#chev"/></svg><div class="cell"><svg class="ic"><use href="#folder"/></svg><span>D:\</span></div></div>
          <div class="row l0"><svg class="ch"><use href="#chev"/></svg><div class="cell"><svg class="ic"><use href="#folder"/></svg><span>W:\</span></div></div>
          <div class="row l0"><svg class="ch"><use href="#chev"/></svg><div class="cell"><svg class="ic"><use href="#folder"/></svg><span>X:\</span></div></div>
          <div class="row l0"><svg class="ch"><use href="#chev"/></svg><div class="cell"><svg class="ic"><use href="#folder"/></svg><span>Y:\</span></div></div>
          <div class="row l0"><svg class="ch"></svg><div class="cell"><svg class="ic"><use href="#folderopen"/></svg><span>Z:\</span></div></div>
        </div>
        <div class="vscroll"><div class="thumb"></div><div class="sb-down"><svg class="sb-ch"><use href="#chevd"/></svg></div></div>
      </div>
      <div class="dock-title gap"><span>Layers</span><svg class="i14"><use href="#dock"/></svg><svg class="i14"><use href="#close"/></svg></div>
      <div class="dock-tb l-tb">
        <svg class="i18"><use href="#paint"/></svg><svg class="i18"><use href="#addgrp"/></svg><svg class="i18"><use href="#eye"/></svg><svg class="i18"><use href="#filter"/></svg><svg class="i18 faded"><use href="#disexpr"/></svg><i class="tri g"></i><svg class="i18"><use href="#expand"/></svg><svg class="i18"><use href="#collapse"/></svg><svg class="i18"><use href="#rmdoc"/></svg>
      </div>
      <div class="layer-list"></div>
      <div class="dock-title gap"><span>AequilibraE</span><svg class="i14"><use href="#dock"/></svg><svg class="i14"><use href="#close"/></svg></div>
      <ul class="aeq">
        <li>Project<i class="ma"></i></li>
        <li>Network Manipulation<i class="ma"></i></li>
        <li>Data<i class="ma"></i></li>
        <li>Trip Distribution</li>
        <li>Paths and assignment<i class="ma"></i></li>
        <li>Public Transport<i class="ma"></i></li>
        <li>GIS<i class="ma"></i></li>
        <li>Parameters</li>
        <li>About</li>
        <li>logfile</li>
        <li>Help</li>
      </ul>
      <label class="showinfo"><span class="check">✓</span>Show project info</label>
      <div class="aeq-input"></div>
    </div>
    <main class="canvas"></main>
    <aside class="rdock">
      <div class="dock-title"><span>Processing Toolbox</span><svg class="i14"><use href="#dock"/></svg><svg class="i14"><use href="#close"/></svg></div>
      <div class="dock-tb r-tb">
        <svg class="i18"><use href="#redgears"/></svg><svg class="i18"><use href="#python"/></svg><svg class="i18"><use href="#clock"/></svg><svg class="i18"><use href="#docg"/></svg><i class="tsep"></i><svg class="i18"><use href="#edit"/></svg><i class="tsep"></i><svg class="i18"><use href="#wrench"/></svg>
      </div>
      <div class="psearch"><svg class="i14"><use href="#searchg"/></svg><span>Search...</span></div>
      <div class="plist">
        <div class="prow"><svg class="ch"><use href="#chev"/></svg><svg class="pic16"><use href="#clock"/></svg><span>Recently used</span></div>
        <div class="prow"><svg class="ch"><use href="#chev"/></svg><svg class="pic16"><use href="#qgis"/></svg><span>Cartography</span></div>
        <div class="prow"><svg class="ch"><use href="#chev"/></svg><svg class="pic16"><use href="#qgis"/></svg><span>Database</span></div>
        <div class="prow"><svg class="ch"><use href="#chev"/></svg><svg class="pic16"><use href="#qgis"/></svg><span>File tools</span></div>
        <div class="prow"><svg class="ch"><use href="#chev"/></svg><svg class="pic16"><use href="#qgis"/></svg><span>Interpolation</span></div>
        <div class="prow"><svg class="ch"><use href="#chev"/></svg><svg class="pic16"><use href="#qgis"/></svg><span>Layer tools</span></div>
        <div class="prow"><svg class="ch"><use href="#chev"/></svg><svg class="pic16"><use href="#qgis"/></svg><span>Mesh</span></div>
        <div class="prow"><svg class="ch"><use href="#chev"/></svg><svg class="pic16"><use href="#qgis"/></svg><span>Network analysis</span></div>
        <div class="prow"><svg class="ch"><use href="#chev"/></svg><svg class="pic16"><use href="#qgis"/></svg><span>Plots</span></div>
        <div class="prow"><svg class="ch"><use href="#chev"/></svg><svg class="pic16"><use href="#qgis"/></svg><span>Raster analysis</span></div>
        <div class="prow"><svg class="ch"><use href="#chev"/></svg><svg class="pic16"><use href="#qgis"/></svg><span>Raster creation</span></div>
        <div class="prow"><svg class="ch"><use href="#chev"/></svg><svg class="pic16"><use href="#qgis"/></svg><span>Raster terrain analysis</span></div>
        <div class="prow"><svg class="ch"><use href="#chev"/></svg><svg class="pic16"><use href="#qgis"/></svg><span>Raster tools</span></div>
        <div class="prow"><svg class="ch"><use href="#chev"/></svg><svg class="pic16"><use href="#qgis"/></svg><span>Vector analysis</span></div>
        <div class="prow"><svg class="ch"><use href="#chev"/></svg><svg class="pic16"><use href="#qgis"/></svg><span>Vector creation</span></div>
        <div class="prow"><svg class="ch"><use href="#chev"/></svg><svg class="pic16"><use href="#qgis"/></svg><span>Vector general</span></div>
        <div class="prow"><svg class="ch"><use href="#chev"/></svg><svg class="pic16"><use href="#qgis"/></svg><span>Vector geometry</span></div>
        <div class="prow"><svg class="ch"><use href="#chev"/></svg><svg class="pic16"><use href="#qgis"/></svg><span>Vector overlay</span></div>
        <div class="prow"><svg class="ch"><use href="#chev"/></svg><svg class="pic16"><use href="#qgis"/></svg><span>Vector selection</span></div>
        <div class="prow"><svg class="ch"><use href="#chev"/></svg><svg class="pic16"><use href="#qgis"/></svg><span>Vector table</span></div>
        <div class="prow"><svg class="ch"><use href="#chev"/></svg><svg class="pic16"><use href="#qgis"/></svg><span>Vector tiles</span></div>
        <div class="prow"><svg class="ch"><use href="#chev"/></svg><svg class="pic16" viewBox="0 0 16 16"><use href="#gdal"/><text x="7.500" y="15" font-size="6" font-weight="700" text-anchor="middle" fill="#111" font-family="Liberation Sans">GDAL</text></svg><span>GDAL</span></div>
        <div class="prow"><svg class="ch"><use href="#chev"/></svg><svg class="pic16"><use href="#gnm"/></svg><span>GDAL GNM</span></div>
        <div class="prow"><svg class="ch"><use href="#chev"/></svg><svg class="pic16"><use href="#grass"/></svg><span>GRASS</span></div>
        <div class="prow"><svg class="ch"><use href="#chev"/></svg><svg class="pic16"><use href="#redgears"/></svg><span>Models</span></div>
        <div class="prow"><svg class="ch"><use href="#chev"/></svg><svg class="pic16"><use href="#otb"/></svg><span>OTB</span></div>
        <div class="prow"><svg class="ch"><use href="#chev"/></svg><svg class="pic16"><use href="#saga"/></svg><span>SAGA</span></div>
        <div class="prow"><svg class="ch"><use href="#chev"/></svg><svg class="pic16"><use href="#python"/></svg><span>Scripts</span></div>
        <div class="prow"><svg class="ch"><use href="#chev"/></svg><svg class="pic16" viewBox="0 0 16 16"><rect width="16" height="16" fill="#8b0b14"/><text x="8" y="13" font-size="14" font-weight="700" text-anchor="middle" fill="#fff" font-family="Liberation Serif">T</text></svg><span>TauDEM</span></div>
        <div class="prow"><svg class="ch"><use href="#chev"/></svg><svg class="pic16"><use href="#wna"/></svg><span>Water Net Analyzer</span></div>
        <div class="prow"><svg class="ch"><use href="#chev"/></svg><svg class="pic16"><use href="#gear"/></svg><span>Water Network Tools</span></div>
        <div class="prow"><svg class="ch"><use href="#chev"/></svg><svg class="pic16"><use href="#wbox"/></svg><span>WhiteboxTools</span></div>
      </div>
    </aside>
  </div>
  <footer class="q-status">
    <div class="locator"><svg class="i14"><use href="#searchg"/></svg><span>Type to locate (Ctrl+K)</span></div>
    <div class="st-right">
      <span>Coordinate</span><div class="st-in w-coord">-47.1773,-21.4506</div>
      <svg class="st-ic"><use href="#mouse"/></svg>
      <span class="st-gap">Scale</span><div class="st-in w-scale"><span>1:96782</span><svg class="i10"><use href="#chevd"/></svg></div>
      <svg class="st-ic lockic"><use href="#lock"/></svg>
      <span>Magnifier</span><div class="st-in w-spin"><span>100%</span><i class="spin"></i></div>
      <span class="st-gap">Rotation</span><div class="st-in w-spin"><span>0.0 °</span><i class="spin"></i></div>
      <span class="check">✓</span><span>Render</span>
      <svg class="i18 earth"><use href="#earth"/></svg><span>EPSG:4326</span>
      <svg class="i18 bub"><use href="#bubble"/></svg>
    </div>
  </footer>

  <div class="popup">
    <div class="pm pmhl"><svg class="i18"><use href="#plug"/></svg><span>Manage and Install Plugins...</span></div>
    <div class="pm-sep"></div>
    <div class="pm"><svg class="i18"><use href="#python"/></svg><span>Python Console</span><em>Ctrl+Alt+P</em></div>
    <div class="pm-sep"></div>
    <div class="pm"><i class="noic"></i><span>GRASS</span><b class="subm"></b></div>
    <div class="pm"><i class="noic"></i><span>Plugin Builder</span><b class="subm"></b></div>
    <div class="pm"><i class="noic"></i><span>Plugin Reloader</span><b class="subm"></b></div>
    <div class="pm"><i class="noic"></i><span>RiverGIS</span><b class="subm"></b></div>
    <div class="pm"><i class="noic"></i><span>Time of Concentration and Lag Time</span><b class="subm"></b></div>
  </div>
</section>

<section class="word">
  <header class="w-title">
    <span class="w-auto">Salvamento Automático</span>
    <span class="toggle"><i></i></span>
    <svg class="wq sv"><use href="#w-sav"/></svg>
    <svg class="wq"><use href="#w-undo"/></svg><i class="tchev"></i>
    <svg class="wq"><use href="#w-redo"/></svg>
    <svg class="wq"><use href="#w-pal"/></svg><i class="tchev dim"></i>
    <i class="tchev more"></i>
    <span class="w-doc">CompPlex.docx <i class="tchev solid"></i></span>
    <div class="w-search"><svg class="i18"><use href="#srch"/></svg><span>Pesquisar (Alt+G)</span></div>
    <svg class="w-circuit" viewBox="0 0 260 34"><g fill="none" stroke="#234b87" stroke-width="2.500"><path d="M0 14h34l8 8h40"/><circle cx="0" cy="14" r="3"/><path d="M26 34c2-10 12-16 24-14"/><circle cx="120" cy="8" r="18"/><path d="M112 2h16l-8 18"/><path d="M200 34l20-12h40"/></g></svg>
    <span class="w-user">Claudio Bielenki Jr</span>
    <span class="avatar"><i></i></span>
    <svg class="wq pen"><use href="#w-pen"/></svg>
    <svg class="wq disp"><use href="#w-disp"/></svg>
    <span class="wc wmin">–</span><span class="wc wmax">❐</span><span class="wc wclose">✕</span>
  </header>
  <nav class="w-tabs">
    <span>Arquivo</span><span class="on">Página Inicial</span><span>Inserir</span><span>Design</span><span>Layout</span><span>Referências</span><span>Correspondências</span><span>Revisão</span><span>Exibir</span><span>Ajuda</span>
    <div class="w-actions">
      <span class="wbtn com"><svg class="i12"><use href="#w-com"/></svg>Comentários</span>
      <span class="wbtn sha"><svg class="i12"><use href="#w-share"/></svg>Compartilhar</span>
    </div>
  </nav>
  <div class="ribbon">
    <div class="grp g-clip">
      <div class="gbody clip">
        <div class="paste"><svg class="ipaste"><use href="#w-paste"/></svg><span>Colar</span><svg class="i8"><use href="#chevd"/></svg></div>
        <div class="cliprows">
          <div class="cr dim"><svg class="i14"><use href="#w-scis"/></svg><span>Recortar</span></div>
          <div class="cr dim"><svg class="i14"><use href="#w-copy"/></svg><span>Copiar</span></div>
          <div class="cr"><svg class="i14"><use href="#w-brush"/></svg><span>Pincel de Formatação</span></div>
        </div>
      </div>
      <div class="glabel"><span>Área de Transferência</span><svg class="launch"><use href="#w-launch"/></svg></div>
    </div>
    <div class="grp g-font">
      <div class="gbody rows2">
        <div class="r1">
          <div class="wbox fname"><span>Times New Ro</span><i class="c"></i></div>
          <div class="wbox fsize"><span>11</span><i class="c"></i></div>
          <span class="rb w25 big">A<sup>^</sup></span><span class="rb w25 big">A<sup>ˇ</sup></span><i class="rs"></i>
          <span class="rb w36 aa">Aa <i class="c"></i></span><i class="rs"></i>
          <span class="rb w24 big era">A</span>
        </div>
        <div class="r1">
          <span class="rb w22 bd">N</span><span class="rb w22 it">I</span><span class="rb w22 un">S</span><i class="c w14"></i>
          <span class="rb w24 st">ab</span><span class="rb w24">x<sub>2</sub></span><span class="rb w24">x<sup>2</sup></span><i class="rs"></i>
          <span class="rb w24 big ao">A</span><i class="c w12"></i>
          <span class="rb w24 mark"><svg class="i14"><use href="#w-high"/></svg></span><i class="c w12"></i>
          <span class="rb w24 big ar">A</span><i class="c w12"></i>
        </div>
      </div>
      <div class="glabel"><span>Fonte</span><svg class="launch"><use href="#w-launch"/></svg></div>
    </div>
    <div class="grp g-para">
      <div class="gbody rows2">
        <div class="r1">
          <span class="rb w24"><svg class="i18"><use href="#w-bullets"/></svg></span><i class="c w16"></i>
          <span class="rb w24"><svg class="i18" viewBox="0 0 20 20"><use href="#w-lines"/><g font-size="7" fill="#1f8ad0" font-family="Liberation Sans"><text x="1" y="7">1</text><text x="1" y="13">2</text><text x="1" y="19">3</text></g></svg></span><i class="c w16"></i>
          <span class="rb w24"><svg class="i18" viewBox="0 0 20 20"><use href="#w-mlines"/><g font-size="6" fill="#1f8ad0" font-family="Liberation Sans"><text x="1" y="6">1</text><text x="4" y="12">a</text><text x="7" y="19">i</text></g></svg></span><i class="c w14"></i><i class="rs"></i>
          <span class="rb w24"><svg class="i18"><use href="#w-dec"/></svg></span><span class="rb w24"><svg class="i18"><use href="#w-inc"/></svg></span><i class="rs"></i>
          <span class="rb w24"><svg class="i18" viewBox="0 0 20 20"><use href="#w-sort"/><text x="1" y="9" font-size="9" fill="#1f8ad0" font-family="Liberation Sans">A</text><text x="1" y="19" font-size="9" fill="#222" font-family="Liberation Sans">Z</text></svg></span><i class="rs"></i>
          <span class="rb w22 tog pil">¶</span>
        </div>
        <div class="r1">
          <span class="rb w24"><svg class="i18"><use href="#w-al"/></svg></span><span class="rb w24"><svg class="i18"><use href="#w-ac"/></svg></span><span class="rb w24"><svg class="i18"><use href="#w-ar"/></svg></span><span class="rb w22 tog"><svg class="i18"><use href="#w-aj"/></svg></span><i class="rs"></i>
          <span class="rb w24"><svg class="i18"><use href="#w-ls"/></svg></span><i class="c w12"></i><i class="rs"></i>
          <span class="rb w24"><svg class="i18"><use href="#w-shade"/></svg></span><i class="c w14"></i>
          <span class="rb w24"><svg class="i18"><use href="#w-bord"/></svg></span><i class="c w14"></i>
        </div>
      </div>
      <div class="glabel"><span>Parágrafo</span><svg class="launch"><use href="#w-launch"/></svg></div>
    </div>
    <div class="grp g-styles">
      <div class="gbody galwrap">
        <div class="gallery">
          <div class="sty cur"><b class="pv s-n">AaBbCcDc</b><span>¶ Normal</span></div>
          <div class="sty"><b class="pv s-n">AaBbCcDc</b><span>¶ Sem Esp...</span></div>
          <div class="sty"><b class="pv s-t1">AaBbCc</b><span>Título 1</span></div>
          <div class="sty"><b class="pv s-t2">AaBbCcD</b><span>Título 2</span></div>
          <div class="sty"><b class="pv s-t">AaB</b><span>Título</span></div>
          <div class="sty"><b class="pv s-sub">AaBbCcD</b><span>Subtítulo</span></div>
          <div class="sty"><b class="pv s-es">AaBbCcDc</b><span>Ênfase Sutil</span></div>
          <div class="sty"><b class="pv s-e">AaBbCcDc</b><span>Ênfase</span></div>
          <div class="sty"><b class="pv s-ei">AaBbCcDc</b><span>Ênfase Int...</span></div>
          <div class="sty"><b class="pv s-f">AaBbCcDc</b><span>Forte</span></div>
          <div class="sty"><b class="pv s-es">AaBbCcDc</b><span>Citação</span></div>
          <div class="sty"><b class="pv s-ci">AaBbCcDc</b><span>Citação In...</span></div>
        </div>
        <div class="galsb"><i class="gu"></i><i class="gm"></i><i class="gd"></i></div>
      </div>
      <div class="glabel"><span>Estilos</span><svg class="launch"><use href="#w-launch"/></svg></div>
    </div>
    <div class="grp g-edit">
      <div class="gbody editrows">
        <div class="cr"><svg class="i22"><use href="#w-find"/></svg><span>Localizar</span><i class="c"></i></div>
        <div class="cr"><svg class="i22" viewBox="0 0 20 24"><use href="#w-rep"/><text x="9" y="9" font-size="10" fill="#8a3ab9" font-family="Liberation Sans">b</text><text x="10" y="21" font-size="10" fill="#1f8ad0" font-family="Liberation Sans">c</text></svg><span>Substituir</span></div>
        <div class="cr"><svg class="i22"><use href="#w-sel"/></svg><span>Selecionar</span><i class="c"></i></div>
      </div>
      <div class="glabel center"><span>Editando</span></div>
    </div>
    <div class="grp g-voz">
      <div class="gbody tall"><svg class="imic"><use href="#w-mic"/></svg><span>Ditar</span></div>
      <div class="glabel center"><span>Voz</span></div>
    </div>
    <div class="grp g-ed">
      <div class="gbody tall"><svg class="imic"><use href="#w-ed"/></svg><span>Editor</span></div>
      <div class="glabel center"><span>Editor</span></div>
    </div>
    <div class="grp g-col"><svg class="i12"><use href="#up"/></svg></div>
  </div>
  <div class="w-ruler">
    <span class="corner">L</span>
    <div class="rul">
      <div class="rg rg1"><span>3</span><span>2</span><span>1</span></div>
      <div class="rw"><span><i class="ymark"></i></span><span>2</span><span>3</span><span>4</span><span>5</span><span>6</span><span>7</span><span>8</span><span>9</span><span>10</span><span>11</span><span>12</span><span>13</span><span>14</span></div>
      <div class="rg rg2"><span>16</span><span>17</span></div>
    </div>
  </div>
  <div class="w-doc-area">
    <div class="v-ruler"></div>
    <div class="w-page">
      <div class="picline">
        <div class="pict">
          <div class="ex-rib"><span class="e1">Área de Transferência</span><span class="e2">Organizar</span><span class="e3">Novo</span><span class="e4">Abrir</span><span class="e5">Selecionar</span></div>
          <div class="ex-addr">
            <span class="nav">←</span><span class="nav dim">→</span><span class="nav sm">⌄</span><span class="nav">↑</span>
            <div class="ex-path"><svg class="i16"><use href="#w-fold"/></svg><span class="crumb">«</span><span>QGIS</span><i>›</i><span>QGIS3</span><i>›</i><span>profiles</span><i>›</i><span>default</span><i>›</i><span>python</span><i>›</i><span>plugins</span><i>›</i><b class="pend"><svg class="i10"><use href="#chevd"/></svg></b><b class="prefresh">↻</b></div>
            <div class="ex-search"><svg class="i14"><use href="#srch"/></svg><span>Pesquisar plugins</span></div>
          </div>
          <div class="ex-body">
            <div class="ex-nav">
              <div class="en acc"><svg class="i14"><use href="#w-star"/></svg><span>Acesso rápido</span></div>
              <div class="en pc"><svg class="i14"><use href="#w-pc"/></svg><span>Este Computador</span></div>
              <div class="en child"><svg class="i14"><use href="#w-desk"/></svg><span>Área de Trabalho</span></div>
              <div class="en child"><svg class="i14"><use href="#w-docs"/></svg><span>Documentos</span></div>
              <div class="en child"><svg class="i14"><use href="#w-dl"/></svg><span>Downloads</span></div>
              <div class="en child"><svg class="i14"><use href="#w-img"/></svg><span>Imagens</span></div>
              <div class="en child"><svg class="i14"><use href="#w-mus"/></svg><span>Músicas</span></div>
              <div class="en child"><svg class="i14"><use href="#w-3d"/></svg><span>Objetos 3D</span></div>
              <div class="en child"><svg class="i14"><use href="#w-vid"/></svg><span>Vídeos</span></div>
            </div>
            <div class="ex-sb s-nav"><i class="au">˄</i><i class="tb"></i><i class="ad">˅</i></div>
            <div class="ex-list">
              <div class="ex-files">
                <div class="fhead">Nome</div>
                <div class="fr"><svg class="i14"><use href="#w-fold"/></svg><span>AequilibraE</span></div>
                <div class="fr"><svg class="i14"><use href="#w-fold"/></svg><span>ana_data_acquisition</span></div>
                <div class="fr"><svg class="i14"><use href="#w-fold"/></svg><span>cbers4a</span></div>
                <div class="fr sel"><svg class="i14"><use href="#w-link"/></svg><span>complexidade</span></div>
                <div class="fr"><svg class="i14"><use href="#w-fold"/></svg><span>hidroweb_downloader</span></div>
                <div class="fr"><svg class="i14"><use href="#w-fold"/></svg><span>hydronet_check_and_flip</span></div>
                <div class="fr"><svg class="i14"><use href="#w-link"/></svg><span>pfafstettertools</span></div>
                <div class="fr"><svg class="i14"><use href="#w-fold"/></svg><span>PghydroTools</span></div>
                <div class="fr"><svg class="i14"><use href="#w-fold"/></svg><span>plugin_reloader</span></div>
                <div class="fr partial"><svg class="i14"><use href="#w-fold"/></svg></div>
                <div class="hsb"><i class="hleft">‹</i><i class="ht"></i><i class="hright">›</i></div>
              </div>
              <div class="ex-sb s-list"><i class="au">˄</i><i class="tb"></i><i class="ad">˅</i></div>
            </div>
            <div class="ex-prev">Nenhuma visualização disponível.</div>
          </div>
          <div class="ex-status"><span>19 itens</span><span class="sep">1 item selecionado</span><i class="vbtn vbon"><svg class="i14"><use href="#w-read"/></svg></i><i class="vbtn"><svg class="i14"><use href="#w-img"/></svg></i></div>
        </div>
        <span class="pilc">¶</span>
      </div>
      <p class="para">Feche·e·reabra·o·QGIS·para·que·o·novo·plugin·fique·disponível.¶</p>
      <p class="para p2">¶</p>
    </div>
  </div>
  <footer class="w-status">
    <span>Página 8 de 8</span><span class="s2">1945 palavras</span>
    <svg class="i14 s3"><use href="#w-spell"/></svg><span class="s4">Português (Brasil)</span>
    <svg class="i14 s5"><use href="#w-macro"/></svg><svg class="i14 s6"><use href="#w-acc"/></svg><span>Acessibilidade: investigar</span>
    <div class="ws-r">
      <svg class="i14"><use href="#w-foco"/></svg><span class="foco">Foco</span>
      <svg class="i14 rd"><use href="#w-read"/></svg>
      <span class="prt"><svg class="i14"><use href="#w-print"/></svg></span>
      <svg class="i14 wb"><use href="#w-web"/></svg>
      <span class="zm">−</span><div class="slider"><i></i></div><span class="zm">+</span><span class="zp">200%</span>
    </div>
  </footer>
</section>

<footer class="task t-left">
  <div class="tk w48"><svg class="i16"><use href="#win"/></svg></div>
  <div class="t-search"><svg class="i16"><use href="#srch"/></svg><span>Digite aqui para pesquisar</span></div>
  <div class="tk w48"><svg class="i16"><use href="#cort"/></svg></div>
  <div class="tk w48"><svg class="i16"><use href="#task"/></svg></div>
  <div class="tk w44"><svg class="i22"><use href="#widget"/></svg></div>
  <div class="tk w41"><svg class="i24"><use href="#store"/></svg></div>
  <div class="tk w41"><svg class="i24"><use href="#mail"/></svg></div>
  <div class="tk w41"><svg class="i24"><use href="#calc"/></svg></div>
  <div class="tk w41"><svg class="i26"><use href="#firefox"/></svg></div>
  <div class="tk lab run first"><svg class="i22"><use href="#folderbar"/></svg><span>Curs...</span></div>
  <div class="tk w36 ed"><svg class="i24"><use href="#edge"/></svg></div>
  <div class="tk w36"><svg class="i24" viewBox="0 0 24 24"><use href="#outlook"/><text x="7" y="15.500" font-size="10" font-weight="700" text-anchor="middle" fill="#fff" font-family="Liberation Sans">O</text></svg></div>
  <div class="tk lab run ch1"><svg class="i24"><use href="#chrome"/></svg><span>icon...</span></div>
  <div class="tk lab run"><svg class="i24"><use href="#parrot"/></svg><span>PySc...</span></div>
  <div class="tk lab run"><svg class="i24"><use href="#admin"/></svg><span>Adm...</span></div>
  <div class="tk lab run"><svg class="i24" viewBox="0 0 24 24"><use href="#fiji"/><text x="12" y="17" font-size="13" font-weight="700" text-anchor="middle" fill="#5b8cc7" font-family="Liberation Sans">iji</text></svg><span>(Fiji I...</span></div>
  <div class="tk lab run"><svg class="i24" viewBox="0 0 24 24"><use href="#ppt"/><text x="8" y="16" font-size="10" font-weight="700" text-anchor="middle" fill="#fff" font-family="Liberation Sans">P</text></svg><span>Apre...</span></div>
  <div class="tk lab run"><svg class="i24"><use href="#snip"/></svg><span>Ferra...</span></div>
  <div class="tk lab run"><svg class="i24" viewBox="0 0 24 24"><use href="#word"/><text x="7" y="15.500" font-size="9.500" font-weight="700" text-anchor="middle" fill="#fff" font-family="Liberation Sans">W</text></svg><span>Com...</span></div>
  <div class="tk lab run"><svg class="i24" viewBox="0 0 24 24"><use href="#word"/><text x="7" y="15.500" font-size="9.500" font-weight="700" text-anchor="middle" fill="#fff" font-family="Liberation Sans">W</text></svg><span>Com...</span></div>
  <div class="tk lab run"><svg class="i24" viewBox="0 0 24 24"><use href="#word"/><text x="7" y="15.500" font-size="9.500" font-weight="700" text-anchor="middle" fill="#fff" font-family="Liberation Sans">W</text></svg><span>H&amp;...</span></div>
  <div class="tk lab run cursel"><svg class="i24"><use href="#qgis"/></svg><span>Untit...</span></div>
  <div class="tk lab run next"><svg class="i26"><use href="#qglobe"/></svg><span>Untit...</span></div>
  <div class="tray">
    <svg class="i12"><use href="#up"/></svg><svg class="i16"><use href="#meet"/></svg><svg class="i16"><use href="#net"/></svg><svg class="i16"><use href="#vol"/></svg>
    <div class="clock"><span>11:39 AM</span><span>3/1/2022</span></div>
    <svg class="i16 nf"><use href="#notif"/></svg>
  </div>
</footer>
<footer class="task t-right">
  <div class="tk w48"><svg class="i16"><use href="#win"/></svg></div>
  <div class="tk w48"><svg class="i16"><use href="#srch"/></svg></div>
  <div class="tk w48"><svg class="i16"><use href="#cort"/></svg></div>
  <div class="tk w48 lastfix"><svg class="i16"><use href="#task"/></svg></div>
  <div class="tk app"><svg class="i22"><use href="#widget"/></svg></div>
  <div class="tk app"><svg class="i24"><use href="#store"/></svg></div>
  <div class="tk app"><svg class="i24"><use href="#mail"/></svg></div>
  <div class="tk app"><svg class="i24"><use href="#calc"/></svg></div>
  <div class="tk app"><svg class="i26"><use href="#firefox"/></svg></div>
  <div class="tk app run"><svg class="i24"><use href="#explorer"/></svg></div>
  <div class="tk app"><svg class="i24"><use href="#edge"/></svg></div>
  <div class="tk app"><svg class="i24" viewBox="0 0 24 24"><use href="#outlook"/><text x="7" y="15.500" font-size="10" font-weight="700" text-anchor="middle" fill="#fff" font-family="Liberation Sans">O</text></svg></div>
  <div class="tk app run"><svg class="i24"><use href="#chrome"/></svg></div>
  <div class="tk app run"><svg class="i24"><use href="#parrot"/></svg></div>
  <div class="tk app run"><svg class="i24" viewBox="0 0 24 24"><use href="#cmd"/><text x="3" y="13" font-size="6" fill="#eee" font-family="Liberation Mono">C:\_</text></svg></div>
  <div class="tk app run"><svg class="i24"><use href="#micro"/></svg></div>
  <div class="tk app run"><svg class="i24" viewBox="0 0 24 24"><use href="#ppt"/><text x="8" y="16" font-size="10" font-weight="700" text-anchor="middle" fill="#fff" font-family="Liberation Sans">P</text></svg></div>
  <div class="tk app run"><svg class="i24"><use href="#snip"/></svg></div>
  <div class="tk app run"><svg class="i24" viewBox="0 0 24 24"><use href="#word"/><text x="7" y="15.500" font-size="9.500" font-weight="700" text-anchor="middle" fill="#fff" font-family="Liberation Sans">W</text></svg></div>
  <div class="tk app run cursel"><svg class="i24"><use href="#qgis"/></svg></div>
  <div class="tk app run"><svg class="i26"><use href="#qglobe"/></svg></div>
  <div class="clock r"><span>11:39 AM</span><span>3/1/2022</span></div>
</footer>
</body>
</html>
```

FILE: styles.css
```css
* { box-sizing: border-box; }
html, body { margin: 0; width: 3840px; height: 1080px; overflow: hidden; }
body {
  display: grid;
  grid-template-columns: 1920px 1920px;
  grid-template-rows: 1040px 40px;
  font: 12px/1.2 "Open Sans", "Noto Sans", sans-serif;
  color: #000;
  background: #efefef;
  white-space: nowrap;
}
.defs { position: absolute; width: 0; height: 0; }
svg { display: block; flex: none; overflow: hidden; }
i, b, em { font-style: normal; }
.i8 { width: 8px; height: 8px; }
.i10 { width: 10px; height: 10px; }
.i12 { width: 12px; height: 12px; }
.i14 { width: 14px; height: 14px; }
.i16 { width: 16px; height: 16px; }
.i18 { width: 18px; height: 18px; }
.i22 { width: 22px; height: 22px; }
.i24 { width: 24px; height: 24px; }
.i26 { width: 26px; height: 26px; }
.i28 { width: 26px; height: 30px; }

/* ---------- QGIS ---------- */
.qgis { position: relative; display: flex; flex-direction: column; height: 1040px; background: #efefef; letter-spacing: -.25px; }
.q-title { height: 23px; background: #27a4f2; display: flex; align-items: center; gap: 5px; padding-left: 3px; font-size: 12.5px; }
.q-menu { height: 20px; background: #fff; display: flex; font-size: 12px; padding-left: 1px; }
.q-menu span { padding: 0 7.500px; display: flex; align-items: center; border: 1px solid transparent; }
.q-menu .active { background: #cce8ff; border-color: #99d1ff; }
.q-tb1 { height: 35px; display: flex; align-items: center; padding-left: 10px; border-bottom: 2px solid #b5b5b5; border-top: 1px solid #f8f8f8; }
.tbi { width: 31px; height: 33px; display: flex; align-items: center; justify-content: center; flex: none; border: 1px solid transparent; }
.tbi.pressed { background: #cce4f7; border-color: #8ec5ee; }
.tbi.dis { opacity: .3; }
.hand { width: 24px; height: 30px; }
.sigma { font: 700 30px/33px "Liberation Serif", serif; color: #a01a9c; }
.tbox { background: #3a9af0; color: #fff; font: italic 700 24px/33px "Liberation Serif", serif; width: 30px; margin-left: 1px; }
.arr { width: 12px; flex: none; display: flex; justify-content: center; }
.arr::before { content: ""; border: 4px solid transparent; border-top: 5px solid #222; margin-top: 4px; }
.arr.g::before { border-top-color: #777; }
.arr.narrow { margin-left: -3px; }
.sp-menu { width: 321px; flex: none; }
.sp-gap { width: 112px; flex: none; }
.vsep { width: 2px; height: 33px; background: #c2c2c2; margin-left: 2px; flex: none; }
.grip { width: 4px; height: 28px; margin: 0 3px; flex: none; background: radial-gradient(circle, #9d9d9d 1px, transparent 1.300px) 0 0/4px 5px; }
.q-tb2 { height: 11px; border-bottom: 2px solid #c5c5c5; flex: none; }
.q-tb3 { height: 35px; display: flex; align-items: center; border-bottom: 2px solid #a8a8a8; padding-left: 1px; flex: none; }
.drop { width: 17px; height: 28px; margin: 0 6px 0 7px; }
.ctitle { width: 85px; font-size: 11.5px; letter-spacing: -.5px; flex: none; }
.flw { width: 24px; height: 26px; background: #fff; display: flex; align-items: center; justify-content: center; margin-right: 7px; }
.flw.c1 { margin-left: 0; color: #f0901e; }
.flw.c2 { color: #9aa9d8; }
.flw.c3 { color: #2e9a8a; }

.q-main { height: 888px; display: flex; flex: none; }
.vtools { width: 47px; flex: none; border-right: 1px solid #b8b8b8; padding-top: 3px; }
.hgrip { height: 5px; margin: 0 4px 7px; background: radial-gradient(circle, #9d9d9d 1px, transparent 1.300px) 0 0/5px 4px; }
.vt { height: 30.200px; display: flex; align-items: center; padding-left: 5px; position: relative; }
.vt .pl { width: 10px; height: 10px; position: absolute; left: 19px; bottom: 0; }
.tri { width: 0; height: 0; border: 4px solid transparent; border-top: 4px solid #222; margin: 4px 0 0 10px; }
.tri.g { border-top-color: #888; margin: 5px 6px 0 -1px; }

.docks { width: 347px; flex: none; display: flex; flex-direction: column; padding-top: 1px; }
.dock-title { height: 25px; background: #d8d8d8; border: 1px solid #bcbcbc; display: flex; align-items: center; padding: 0 5px; gap: 8px; font-size: 12.5px; flex: none; }
.dock-title span { flex: 1; }
.dock-title.gap { margin-top: 6px; }
.dock-tb { height: 28px; display: flex; align-items: center; flex: none; }
.b-tb { gap: 5px; padding-left: 5px; }
.l-tb { gap: 5px; padding-left: 4px; height: 29px; }
.faded { opacity: .5; }
.tree { height: 344px; background: #fff; border: 1px solid #a6a6a6; display: flex; flex: none; overflow: hidden; }
.rows { flex: 1; overflow: hidden; }
.row { height: 20px; display: flex; align-items: center; }
.row.l0 { padding-left: 4px; }
.row.l1 { padding-left: 24px; }
.row.l2 { padding-left: 44px; }
.ch { width: 12px; height: 12px; margin-right: 8px; }
.cell { display: flex; align-items: center; gap: 7px; height: 20px; }
.cell.sel { background: #d9d9d9; width: 225px; margin-left: -4px; padding-left: 4px; }
.ic { width: 14px; height: 14px; }
.ics { width: 16px; height: 18px; margin: 0 -1px; }
.vscroll { width: 15px; margin-right: 2px; background: #f0f0f0; display: flex; flex-direction: column; }
.thumb { height: 177px; background: #cdcdcd; }
.sb-down { margin-top: auto; height: 16px; display: flex; justify-content: center; align-items: center; }
.sb-ch { width: 10px; height: 10px; }
.layer-list { height: 151px; background: #fff; border: 1px solid #8c8c8c; flex: none; }
.aeq { margin: 0; padding: 5px 0 0 6px; list-style: none; font-size: 12px; flex: none; }
.aeq li { height: 19px; display: flex; align-items: center; }
.ma { width: 0; height: 0; border: 3px solid transparent; border-top: 3px solid #111; margin: 6px 0 0 0; }
.showinfo { display: flex; align-items: center; gap: 5px; height: 16px; padding-left: 2px; margin-top: -3px; flex: none; }
.check { width: 13px; height: 13px; border: 1px solid #444; background: #fff; display: flex; align-items: center; justify-content: center; font-size: 10px; line-height: 11px; flex: none; }
.aeq-input { width: 125px; height: 16px; margin: 2px 0 0 2px; background: #fafafa; border: 1px solid #dcdcdc; flex: none; }

.canvas { flex: none; width: 1190px; margin: 0 0 0 4px; background: #fff; border-right: 1px solid #a0a0a0; border-left: 1px solid #a0a0a0; border-bottom: 1px solid #a0a0a0; }
.rdock { width: 327px; margin-left: 5px; display: flex; flex-direction: column; padding-top: 1px; flex: none; }
.r-tb { gap: 5px; padding-left: 4px; }
.tsep { width: 1px; height: 16px; background: #c0c0c0; }
.psearch { height: 20px; background: #fff; border: 1px solid #8c8c8c; border-bottom: 2px solid #8c8c8c; display: flex; align-items: center; gap: 8px; padding-left: 8px; color: #888; flex: none; }
.plist { height: 815px; background: #fff; border: 1px solid #a0a0a0; border-top: 0; padding-top: 2px; flex: none; }
.prow { height: 20px; display: flex; align-items: center; padding-left: 4px; }
.prow .ch { margin-right: 8px; }
.pic16 { width: 16px; height: 16px; margin-right: 6px; }

.q-status { height: 28px; display: flex; align-items: center; padding-left: 4px; flex: none; }
.locator { width: 200px; height: 20px; background: #fff; border: 1px solid #707070; display: flex; align-items: center; gap: 7px; padding-left: 8px; color: #777; flex: none; }
.st-right { margin-left: auto; display: flex; align-items: center; padding-right: 6px; gap: 3px; letter-spacing: -.45px; font-size: 11.5px; }
.st-in { height: 20px; background: #fff; border: 1px solid #707070; display: flex; align-items: center; padding-left: 2px; flex: none; }
.w-coord { width: 106px; }
.w-scale { width: 77px; justify-content: space-between; padding-right: 3px; }
.w-spin { width: 80px; justify-content: space-between; }
.st-ic { width: 13px; height: 20px; margin: 0 5px; }
.lockic { margin: 0 3px 0 12px; }
.st-gap { margin-left: 4px; }
.spin { width: 16px; height: 18px; border-left: 1px solid #aaa; background: linear-gradient(#e6e6e6 0 0) 0 8px/100% 1px no-repeat; position: relative; }
.spin::before { content: "▲"; position: absolute; top: 0; left: 4px; font-size: 7px; }
.spin::after { content: "▼"; position: absolute; top: 9px; left: 4px; font-size: 7px; }
.earth { margin-left: 14px; }
.bub { margin-left: 12px; }

.popup { position: absolute; left: 233px; top: 43px; width: 329px; height: 178px; background: #efefef; border: 1px solid #b5b5b5; box-shadow: 2px 2px 2px rgba(0,0,0,.3); padding: 3px 2px; z-index: 5; font-size: 12.5px; }
.pm { height: 22px; display: flex; align-items: center; padding-left: 3px; }
.pmhl { background: #91c9f7; }
.pm span { margin-left: 11px; flex: 1; }
.pm em { margin-right: 15px; }
.noic { width: 18px; flex: none; }
.subm { width: 0; height: 0; border: 4px solid transparent; border-left: 5px solid #111; margin-right: 8px; }
.pm-sep { height: 1px; background: #cfcfcf; margin: 4px 8px 4px 30px; }

/* ---------- Word ---------- */
.word { display: flex; flex-direction: column; height: 1040px; background: #e6e6e6; color: #444; letter-spacing: -.2px; }
.w-title { height: 34px; background: #2b579a; display: flex; align-items: center; color: #d5dfee; padding-left: 21px; position: relative; flex: none; overflow: hidden; }
.w-auto { width: 135px; flex: none; font-size: 12px; letter-spacing: -.35px; }
.toggle { width: 38px; height: 19px; border: 1.500px solid #fff; border-radius: 10px; display: flex; align-items: center; padding-left: 3px; flex: none; }
.toggle i { width: 11px; height: 11px; background: #fff; border-radius: 50%; }
.wq { width: 16px; height: 18px; }
.sv { margin: 0 15px 0 9px; }
.w-title > .tchev { width: 0; height: 0; border: 3px solid transparent; border-top: 3px solid #d5dfee; margin: 3px 12px 0 5px; }
.w-title > .tchev.dim { border-top-color: #92a9cc; }
.w-title > .tchev.more { margin-left: 14px; }
.w-doc { position: absolute; left: 524px; font-size: 12.5px; display: flex; align-items: center; gap: 6px; }
.w-doc .tchev { width: 0; height: 0; border: 3px solid transparent; border-top: 3px solid #d5dfee; margin-top: 3px; }
.w-search { position: absolute; left: 786px; top: 6px; width: 365px; height: 22px; background: #a5b7d2; display: flex; align-items: center; gap: 13px; padding-left: 14px; color: #2b579a; }
.w-search .i18 { width: 16px; height: 16px; }
.w-circuit { position: absolute; left: 1390px; top: 0; width: 450px; height: 34px; opacity: .9; }
.w-user { position: absolute; left: 1547px; }
.avatar { position: absolute; left: 1656px; top: 5px; width: 24px; height: 24px; border-radius: 50%; background: #7d8f78; overflow: hidden; }
.avatar i { display: block; width: 10px; height: 12px; border-radius: 50%; background: #d9b395; margin: 5px auto 0; box-shadow: 0 10px 0 4px #f3f3f3; }
.pen { position: absolute; left: 1705px; top: 8px; }
.disp { position: absolute; left: 1751px; top: 8px; }
.wc { position: absolute; width: 20px; text-align: center; font-size: 14px; }
.wmin { left: 1795px; }
.wmax { left: 1840px; }
.wclose { left: 1887px; }

.w-tabs { height: 32px; background: #f3f2f1; display: flex; align-items: center; gap: 28.500px; padding-left: 14px; font-size: 13px; flex: none; }
.w-tabs .on { font-weight: 600; color: #2b2b2b; display: flex; align-items: center; border-bottom: 2px solid #2b579a; height: 27px; margin-top: 1px; }
.w-actions { margin-left: auto; display: flex; gap: 8px; padding-right: 12px; }
.wbtn { height: 23px; background: #fff; border: 1px solid #e1dfdd; border-radius: 3px; display: flex; align-items: center; gap: 4px; color: #2b579a; padding-left: 7px; font-weight: 600; }
.wbtn.com { width: 111px; }
.wbtn.sha { width: 113px; }

.ribbon { height: 94px; background: #f3f2f1; display: flex; border-bottom: 1px solid #d8d8d8; flex: none; }
.grp { display: flex; flex-direction: column; border-right: 1px solid #d2d0ce; flex: none; }
.g-clip { width: 200px; }
.g-font { width: 296px; }
.g-para { width: 248px; }
.g-styles { width: 901px; }
.g-edit { width: 110px; }
.g-voz { width: 58px; }
.g-ed { width: 59px; }
.g-col { width: 48px; border: 0; justify-content: flex-end; align-items: center; padding-bottom: 3px; }
.gbody { height: 76px; flex: none; }
.glabel { flex: 1; display: flex; align-items: center; justify-content: center; position: relative; font-size: 12.500px; padding-bottom: 4px; }
.launch { width: 9px; height: 9px; position: absolute; right: 3px; bottom: 5px; }
.clip { display: flex; }
.paste { width: 54px; display: flex; flex-direction: column; align-items: center; padding-top: 4px; gap: 4px; flex: none; }
.ipaste { width: 30px; height: 32px; }
.cliprows { display: flex; flex-direction: column; padding-top: 4px; }
.cr { height: 24px; display: flex; align-items: center; gap: 4px; }
.cr.dim { color: #a6a6a6; }
.rows2 { display: flex; flex-direction: column; gap: 9px; padding: 11px 0 0 8px; }
.g-font .rows2 { padding-left: 9px; }
.r1 { display: flex; align-items: center; height: 24px; }
.wbox { height: 22px; background: #fff; border: 1px solid #d2d0ce; display: flex; align-items: center; padding: 0 3px; justify-content: space-between; color: #222; flex: none; }
.fname { width: 93px; margin-right: 3px; }
.fsize { width: 60px; }
.c { display: inline-block; width: 8px; height: 8px; flex: none; position: relative; }
.c::before { content: ""; position: absolute; left: 1px; top: 0; width: 4px; height: 4px; border-right: 1px solid #555; border-bottom: 1px solid #555; transform: rotate(45deg); }
.c.w12 { width: 12px; }
.c.w14 { width: 14px; }
.c.w16 { width: 16px; }
.rb { display: flex; align-items: center; justify-content: center; height: 24px; flex: none; color: #333; }
.w22 { width: 22px; }
.w24 { width: 24px; }
.w25 { width: 25px; }
.w36 { width: 36px; }
.rb.w36 { gap: 3px; }
.big { font-size: 18px; }
.big sup { font-size: 8px; line-height: 1; align-self: flex-start; margin-top: 4px; color: #1f6cb5; }
.rb sub, .rb sup { font-size: 8px; color: #1f8ad0; line-height: 1; }
.aa { font-size: 14px; }
.era { color: #333; position: relative; }
.era::after { content: ""; position: absolute; right: 3px; bottom: 4px; width: 8px; height: 6px; background: #e9c6ee; border: 1px solid #8a3ab9; transform: rotate(-40deg); }
.bd { font: 700 15px "Liberation Sans", sans-serif; }
.it { font: italic 15px "Liberation Serif", serif; }
.un { text-decoration: underline; font-size: 14px; }
.st { text-decoration: line-through; font-size: 14px; }
.ao { color: #1f7ad0; font-weight: 700; -webkit-text-stroke: .5px #1f5ca8; }
.ar { box-shadow: inset 0 -5px 0 -1px #e11; }
.mark { box-shadow: inset 0 -5px 0 -1px #ff0; }
.tog { background: #c8c6c4; border: 1px solid #8a8886; }
.pil { font: 700 17px "Liberation Serif", serif; }
.rs { width: 1px; height: 22px; background: #d2d0ce; margin: 0 4px; flex: none; }
.galwrap { display: flex; padding: 5px 0 0 9px; }
.gallery { width: 868px; height: 59px; background: #fff; border: 1px solid #c8c6c4; display: flex; padding: 2px 1px; }
.sty { width: 72px; flex: none; display: flex; flex-direction: column; align-items: center; border: 1px solid transparent; overflow: hidden; font-size: 12.5px; color: #444; }
.sty.cur { border: 2px solid #b0aeac; }
.pv { height: 34px; width: 64px; overflow: hidden; display: flex; align-items: center; justify-content: center; font-weight: 400; color: #000; font-size: 13px; line-height: 1; flex: none; letter-spacing: -.3px; }
.s-t1 { color: #2f6bb5; font-size: 18px; }
.s-t2 { color: #2f6bb5; font-size: 15px; }
.s-t { font-size: 30px; font-weight: 300; line-height: 1; }
.s-sub { color: #5a5a5a; font-size: 13px; letter-spacing: .3px; }
.s-es { font-style: italic; color: #404040; }
.s-e { font-style: italic; color: #000; }
.s-ei { font-style: italic; color: #3d7cd0; }
.s-f { font-weight: 700; color: #000; }
.s-ci { font-style: italic; color: #3d7cd0; border-top: 1px solid #3d7cd0; border-bottom: 1px solid #3d7cd0; height: 22px; margin: 6px 0; }
.galsb { width: 14px; height: 59px; display: flex; flex-direction: column; margin-left: 0; }
.galsb i { flex: 1; background: #fff; border: 1px solid #c8c6c4; border-left: 0; display: flex; align-items: center; justify-content: center; font-size: 7px; color: #555; }
.gu::before { content: "▲"; color: #bbb; }
.gm::before { content: "▼"; }
.gd::before { content: "▼"; }
.editrows { padding: 2px 0 0 5px; display: flex; flex-direction: column; }
.editrows .cr { height: 23px; gap: 3px; }
.tall { display: flex; flex-direction: column; align-items: center; gap: 6px; padding-top: 4px; }
.imic { width: 30px; height: 36px; }

.w-ruler { height: 20px; background: #e6e6e6; display: flex; align-items: flex-start; flex: none; }
.corner { width: 14px; height: 16px; margin: 2px 0 0 2px; background: #f3f3f3; border: 1px solid #ccc; font-size: 8px; text-align: center; color: #333; font-weight: 700; }
.rul { margin: 6px 0 0 152px; display: flex; height: 10px; font-size: 10px; line-height: 10px; color: #555; }
.rg { background: #c6c6c6 radial-gradient(circle, #666 .7px, transparent 1px) 18px 0/18.900px 10px; display: flex; flex: none; }
.rg span { flex: none; background: #c6c6c6; width: 14px; margin-right: 61.500px; text-align: center; }
.rg1 { width: 227px; }
.rg2 { width: 228px; padding-left: 72px; }
.rw { width: 1133px; background: #fff radial-gradient(circle, #666 .7px, transparent 1px) 9px 0/18.900px 10px; display: flex; padding-left: 68px; flex: none; position: relative; }
.rw::before { content: ""; position: absolute; left: -4px; top: 4px; border: 4px solid transparent; border-bottom: 6px solid #fff; border-top: 0; filter: drop-shadow(0 0 .5px #555); }
.rw::after { content: ""; position: absolute; right: -4px; top: 4px; border: 4px solid transparent; border-bottom: 6px solid #fff; border-top: 0; filter: drop-shadow(0 0 .5px #555); }
.rw span { width: 14px; margin-right: 61.500px; flex: none; background: #fff; text-align: center; }
.ymark { display: block; margin: -6px auto 0; width: 0; border: 5px solid transparent; border-top: 8px solid #fff; border-bottom: 0; filter: drop-shadow(0 0 .5px #555); }

.w-doc-area { flex: 1; display: flex; overflow: hidden; height: 838px; }
.v-ruler { width: 11px; height: 100%; background: #fff; margin: 0 155px 0 5px; flex: none; border-right: 1px solid #ddd; border-left: 1px solid #ddd; }
.w-page { width: 1585px; height: 838px; background: #fff; padding-left: 302px; flex: none; color: #000; }
.picline { display: flex; align-items: flex-end; }
.pict { width: 859px; height: 337px; border: 1px solid #1e9ee8; border-top: 0; display: flex; flex-direction: column; color: #333; font-size: 12px; overflow: hidden; letter-spacing: -.3px; }
.pilc { font: 28px/22px "Liberation Serif", serif; margin: 0 0 -6px 2px; }
.ex-rib { height: 29px; background: #f5f6f7; border-bottom: 1px solid #dadbdc; display: flex; align-items: center; flex: none; color: #555; padding-top: 8px; }
.ex-rib span { flex: none; text-align: center; border-right: 1px solid #dadbdc; height: 18px; line-height: 18px; }
.e1 { width: 277px; }
.e2 { width: 199px; }
.e3 { width: 82px; }
.e4 { width: 154px; }
.ex-rib .e5 { width: 116px; border: 0; }
.ex-addr { height: 42px; display: flex; align-items: center; padding-left: 12px; flex: none; }
.nav { width: 25px; font-size: 17px; color: #555; flex: none; text-align: left; }
.nav.dim { color: #c3c3c3; }
.nav.sm { width: 19px; font-size: 11px; color: #888; }
.nav:nth-child(4) { width: 23px; }
.ex-path { width: 529px; height: 29px; border: 1px solid #d9d9d9; border-bottom-width: 2px; display: flex; align-items: center; gap: 9px; padding-left: 4px; flex: none; color: #222; position: relative; }
.ex-path i { color: #777; font-size: 12px; }
.ex-path .crumb { color: #777; }
.pend { margin-left: auto; margin-right: 8px; }
.prefresh { width: 29px; height: 27px; border-left: 1px solid #d9d9d9; display: flex; align-items: center; justify-content: center; font-weight: 400; font-size: 16px; color: #666; }
.ex-search { width: 199px; height: 29px; margin-left: 12px; border: 1px solid #d9d9d9; border-bottom-width: 2px; display: flex; align-items: center; gap: 10px; padding-left: 14px; color: #888; flex: none; }
.ex-search .i14 { opacity: .5; }
.ex-body { height: 243px; display: flex; flex: none; }
.ex-nav { width: 327px; flex: none; padding-top: 17px; font-size: 12.5px; }
.en { display: flex; align-items: center; gap: 3px; height: 23.700px; }
.en.acc { background: #d9d9d9; padding-left: 25px; }
.en.pc { padding-left: 25px; margin-top: 9px; }
.en.child { padding-left: 33px; }
.ex-sb { width: 15px; flex: none; background: #f0f0f0; display: flex; flex-direction: column; font-size: 9px; align-items: center; color: #555; }
.ex-sb .au, .ex-sb .ad { height: 17px; line-height: 17px; }
.ex-sb .tb { width: 100%; background: #cdcdcd; }
.s-nav .tb { height: 126px; }
.s-nav .ad { margin-top: auto; }
.s-list { height: 225px; margin-left: -1px; }
.s-list .tb { height: 95px; }
.s-list .ad { margin-top: auto; }
.ex-list { width: 236px; margin-left: 5px; display: flex; flex: none; position: relative; }
.ex-files { width: 219px; overflow: hidden; }
.fhead { height: 17px; margin: 4px 0 8px 9px; color: #4c6a8d; }
.fr { height: 20.800px; display: flex; align-items: center; gap: 4px; padding-left: 7px; font-size: 12.5px; color: #222; margin-left: 7px; }
.fr.sel { background: #cce8ff; border: 1px solid #99d1ff; margin-left: 6px; padding-left: 7px; }
.fr.partial { height: 6px; overflow: hidden; align-items: flex-start; margin-bottom: 11px; padding-top: 2px; }
.hsb { height: 14px; background: #f0f0f0; display: flex; align-items: center; font-size: 12px; line-height: 14px; }
.hleft { width: 15px; text-align: center; flex: none; }
.hright { margin-left: auto; width: 15px; text-align: center; }
.ht { width: 68px; height: 14px; background: #cdcdcd; }
.ex-prev { flex: 1; display: flex; align-items: center; justify-content: center; color: #6d6d6d; padding: 0 0 2px 0; }
.ex-status { flex: 1; display: flex; align-items: center; padding-left: 15px; gap: 20px; color: #333; font-size: 12.5px; }
.ex-status .sep { flex: 1; }
.vbtn { width: 20px; height: 22px; display: flex; align-items: center; justify-content: center; margin-left: -14px; }
.vbon { background: #cce8ff; border: 1px solid #99d1ff; }
.para { margin: 22px 0 0; font: 28.300px/40px "Liberation Serif", serif; letter-spacing: 0; }
.p2 { margin-top: 17px; }

.w-status { height: 21px; background: #f3f2f1; border-top: 1px solid #d0d0d0; display: flex; align-items: center; padding-left: 8px; flex: none; color: #555; font-size: 12px; }
.s2 { margin-left: 19px; }
.s3 { margin: 0 18px 0 14px; }
.s4 { width: 146px; flex: none; margin-left: -2px; }
.s5 { margin-right: 17px; }
.s6 { margin-right: 5px; }
.ws-r { margin-left: auto; display: flex; align-items: center; padding-right: 8px; height: 100%; }
.foco { margin: 0 50px 0 3px; }
.rd { margin-right: 14px; margin-left: -4px; }
.prt { width: 40px; height: 100%; background: #d0d0d0; display: flex; align-items: center; justify-content: center; }
.wb { margin: 0 14px 0 13px; }
.zm { width: 11px; text-align: center; font-size: 13px; }
.slider { width: 100px; height: 1px; background: #555; position: relative; margin: 0; }
.slider i { position: absolute; left: 58px; top: -10px; width: 5px; height: 19px; background: #666; }
.zp { margin-left: 6px; }

/* ---------- Taskbars ---------- */
.task { background: #eeeeee; display: flex; align-items: center; height: 40px; overflow: hidden; font-size: 13px; color: #222; letter-spacing: -.2px; }
.tk { height: 40px; display: flex; align-items: center; justify-content: center; flex: none; }
.w48 { width: 48px; }
.w44 { width: 44px; }
.w41 { width: 41px; }
.t-search { width: 344px; height: 39px; background: #fff; border: 1px solid #d5d5d5; display: flex; align-items: center; gap: 12px; padding-left: 12px; font-size: 15px; color: #222; flex: none; }
.lab { width: 69px; margin-right: 8px; justify-content: flex-start; gap: 4px; padding-left: 4px; }
.run { background: linear-gradient(#27a4f2, #27a4f2) center bottom/100% 3px no-repeat; }
.first { margin-left: 5px; }
.first .i22 { width: 14px; }
.ed { margin-left: -1px; }
.ch1 { margin-left: 9px; }
.lab.cursel { width: 76px; background-color: #f8f8f8; margin-left: -2px; margin-right: 5px; }
.next { width: 68px; margin-right: 0; }
.tray { margin-left: auto; display: flex; align-items: center; gap: 8px; padding-right: 5px; height: 100%; }
.clock { display: flex; flex-direction: column; align-items: center; gap: 5px; width: 60px; margin: 0 8px 0 2px; line-height: 1.1; }
.nf { margin: 0 12px 0 8px; }
.tray::after { content: ""; width: 1px; height: 36px; background: #c9c9c9; }
.t-right .app { width: 48.900px; flex: none; }
.t-right .lastfix { margin-right: 3px; }
.t-right .run { background-size: 40px 3px; }
.t-right .cursel { background-color: #f8f8f8; }
.clock.r { margin-left: auto; margin-right: 4px; align-items: flex-end; }
```
